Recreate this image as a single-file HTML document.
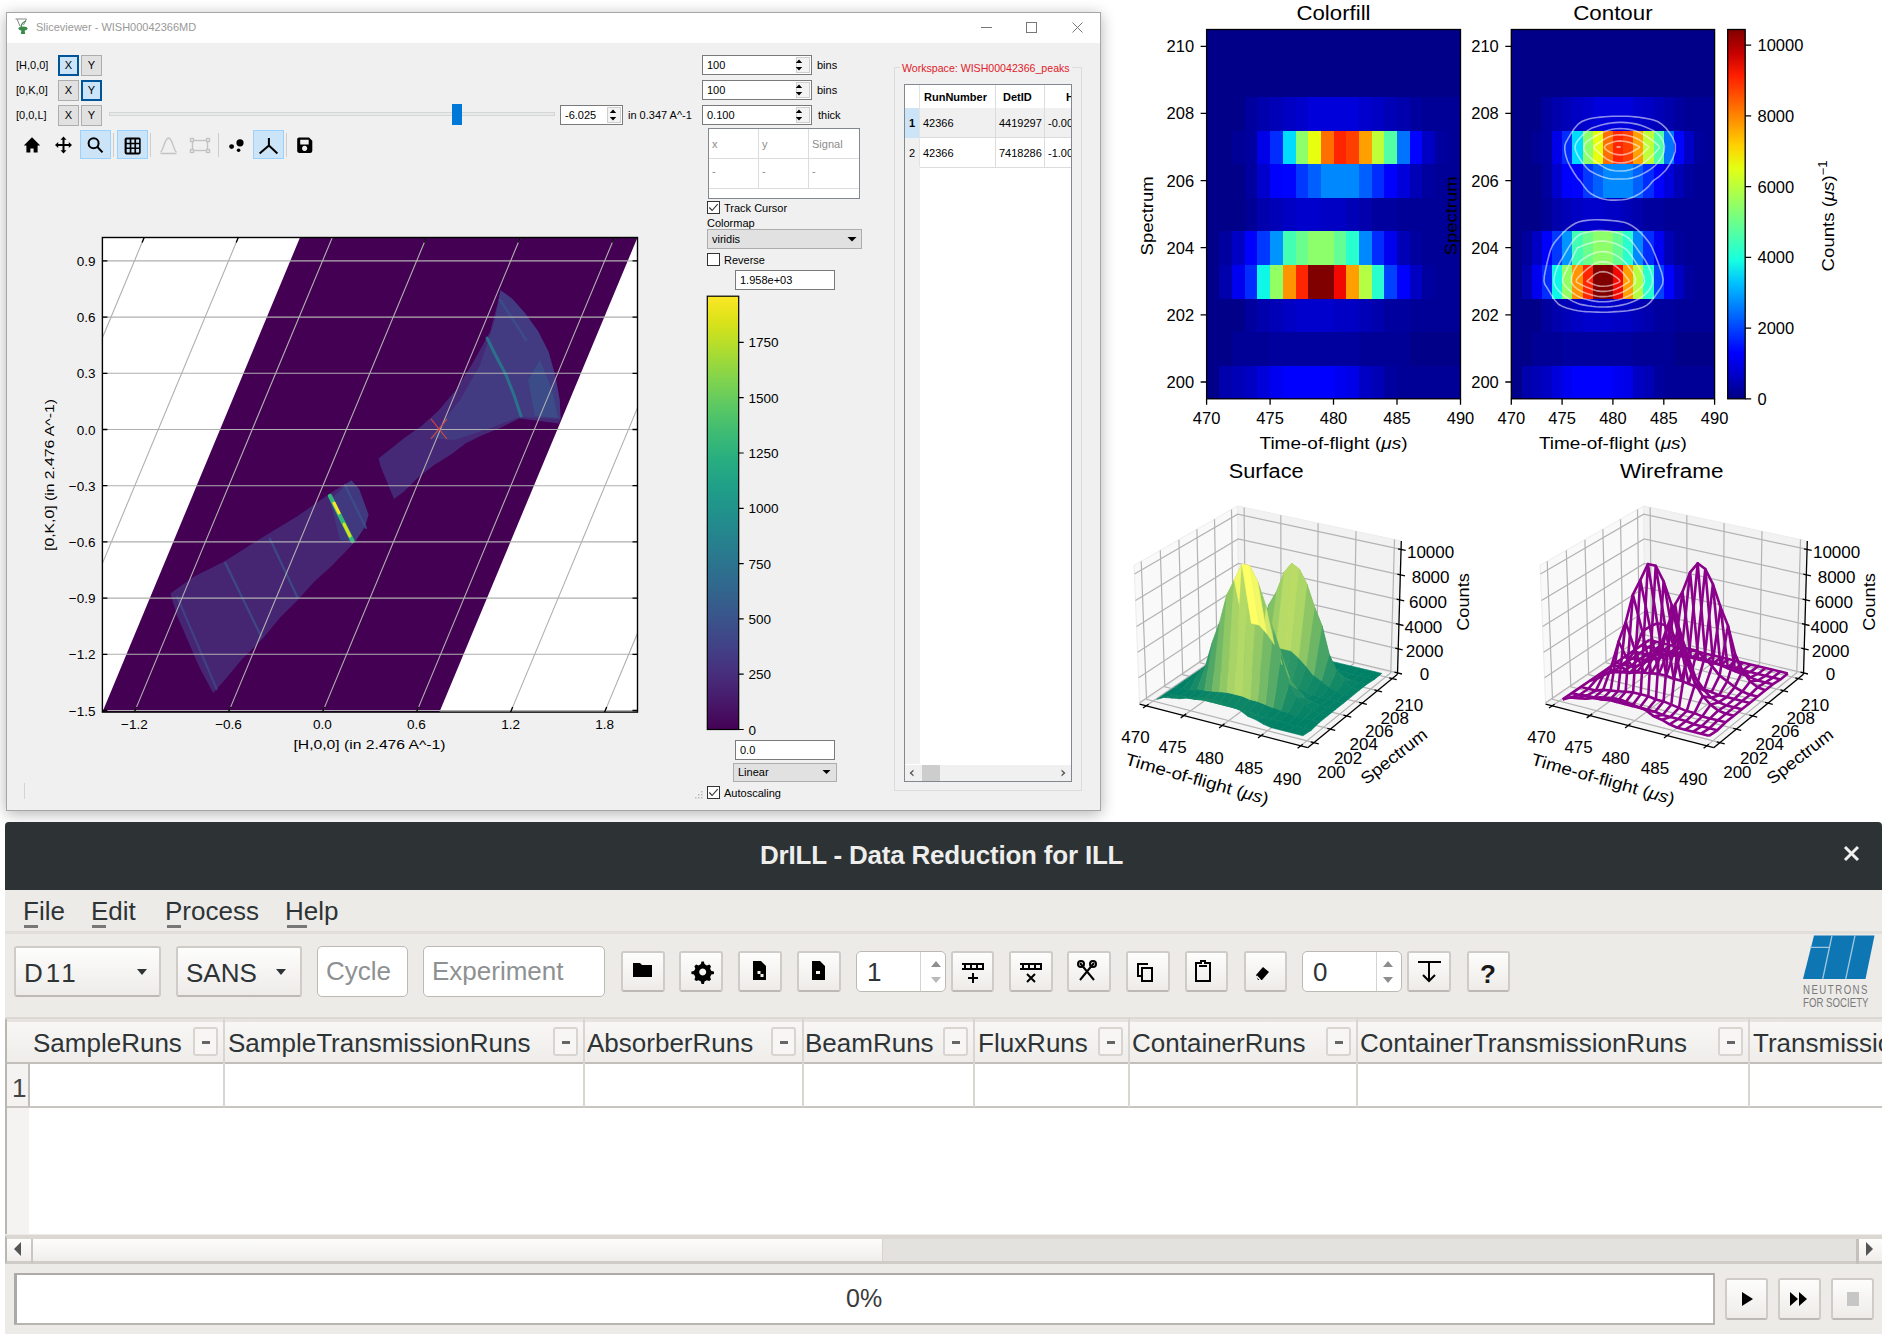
<!DOCTYPE html>
<html><head><meta charset="utf-8">
<style>
*{box-sizing:border-box;margin:0;padding:0}
html,body{width:1885px;height:1340px;overflow:hidden;background:#fff}
body{position:relative;font-family:"Liberation Sans",sans-serif;color:#000}
.a{position:absolute}
.t{position:absolute;white-space:nowrap;line-height:1}
.s11{font-size:11px}
#sv{left:6px;top:12px;width:1095px;height:799px;background:#f0f0f0;border:1px solid #a6a6a6;box-shadow:0 3px 14px rgba(0,0,0,0.30)}
.btn{position:absolute;width:21px;height:21px;background:#e1e1e1;border:1px solid #adadad;font-size:11px;text-align:center;line-height:19px}
.bsel{background:#cce4f7;border:2px solid #005499;line-height:17px}
.spin{position:absolute;height:20px;background:#fff;border:1px solid #7a7a7a;font-size:11px;line-height:18px;padding-left:4px}
.spin i{position:absolute;right:1px;top:1px;width:14px;bottom:1px;border:1px solid #cfcfcf;background:#f3f3f3}
.tb{position:absolute;top:130px;height:29px;width:31px;background:#cce4f7;border:1px solid #99d1ff}
.sep{position:absolute;top:133px;width:1px;height:24px;background:#cdcdcd}
.cb{position:absolute;width:13px;height:13px;background:#fff;border:1px solid #333}
.edit{position:absolute;background:#fff;border:1px solid #7a7a7a;font-size:11px;line-height:18px;padding-left:4px}
.combo{position:absolute;background:#e1e1e1;border:1px solid #adadad;font-size:11px;line-height:18px;padding-left:4px}
#dr{left:5px;top:822px;width:1877px;height:512px;background:#edebe8;border-radius:4px 4px 0 0;overflow:hidden}
.gbtn{position:absolute;border:2px solid #cfcbc7;border-bottom-color:#bdb9b5;border-radius:3px;background:linear-gradient(#fdfdfc,#eeece9)}
.gin{position:absolute;background:#fff;border:1px solid #bdb9b4;border-radius:5px;font-size:26px;line-height:48px;padding-left:8px;color:#2e3436}
.hd{position:absolute;font-size:26px;line-height:1;color:#2e3436;white-space:nowrap}
.mb{position:absolute;top:1027px;width:25px;height:29px;border:2px solid #d8d5d1;border-radius:3px;background:#f7f6f5}
.mb:after{content:"";position:absolute;left:7px;top:12px;width:8px;height:3px;background:#666}
.vd{position:absolute;top:1018px;width:2px;height:89px;background:#d9d5d0}
</style></head><body>
<div id="sv" class="a"><div class="a" style="left:0;top:0;width:1093px;height:30px;background:#fff"></div></div>
<div class="t s11" style="left:36px;top:22px;color:#999">Sliceviewer - WISH00042366MD</div>
<div class="a" style="left:981px;top:27px;width:11px;height:1px;background:#777"></div>
<div class="a" style="left:1026px;top:22px;width:11px;height:11px;border:1px solid #777"></div>
<div class="t s11" style="left:16px;top:60px">[H,0,0]</div>
<div class="t s11" style="left:16px;top:85px">[0,K,0]</div>
<div class="t s11" style="left:16px;top:110px">[0,0,L]</div>
<div class="btn bsel" style="left:58px;top:55px">X</div>
<div class="btn" style="left:81px;top:55px">Y</div>
<div class="btn" style="left:58px;top:80px">X</div>
<div class="btn bsel" style="left:81px;top:80px">Y</div>
<div class="btn" style="left:58px;top:105px">X</div>
<div class="btn" style="left:81px;top:105px">Y</div>
<div class="a" style="left:109px;top:112px;width:446px;height:4px;background:#e7eaea;border:1px solid #d6d6d6"></div>
<div class="a" style="left:452px;top:104px;width:10px;height:21px;background:#0078d7"></div>
<div class="spin" style="left:560px;top:105px;width:63px">-6.025<i></i></div>
<div class="t s11" style="left:628px;top:110px">in 0.347 A^-1</div>
<div class="spin" style="left:702px;top:55px;width:110px">100<i></i></div>
<div class="spin" style="left:702px;top:80px;width:110px">100<i></i></div>
<div class="spin" style="left:702px;top:105px;width:110px">0.100<i></i></div>
<div class="t s11" style="left:817px;top:60px">bins</div>
<div class="t s11" style="left:817px;top:85px">bins</div>
<div class="t s11" style="left:818px;top:110px">thick</div>
<div class="tb" style="left:80px"></div>
<div class="tb" style="left:117px"></div>
<div class="tb" style="left:253px"></div>
<div class="sep" style="left:113px"></div>
<div class="sep" style="left:150px"></div>
<div class="sep" style="left:218px"></div>
<div class="sep" style="left:286px"></div>
<div class="a" style="left:708px;top:128px;width:152px;height:71px;background:#fff;border:1px solid #828790"></div>
<div class="a" style="left:758px;top:129px;width:1px;height:59px;background:#dcdcdc"></div>
<div class="a" style="left:808px;top:129px;width:1px;height:59px;background:#dcdcdc"></div>
<div class="a" style="left:709px;top:158px;width:150px;height:1px;background:#dcdcdc"></div>
<div class="a" style="left:709px;top:188px;width:150px;height:1px;background:#dcdcdc"></div>
<div class="t s11" style="left:712px;top:139px;color:#8c8c8c">x</div>
<div class="t s11" style="left:762px;top:139px;color:#8c8c8c">y</div>
<div class="t s11" style="left:812px;top:139px;color:#8c8c8c">Signal</div>
<div class="t s11" style="left:712px;top:166px;color:#8c8c8c">-</div>
<div class="t s11" style="left:762px;top:166px;color:#8c8c8c">-</div>
<div class="t s11" style="left:812px;top:166px;color:#8c8c8c">-</div>
<div class="cb" style="left:707px;top:201px"></div>
<div class="t s11" style="left:724px;top:203px">Track Cursor</div>
<div class="t s11" style="left:707px;top:218px">Colormap</div>
<div class="combo" style="left:707px;top:229px;width:155px;height:20px">viridis</div>
<div class="cb" style="left:707px;top:253px"></div>
<div class="t s11" style="left:724px;top:255px">Reverse</div>
<div class="edit" style="left:735px;top:270px;width:100px;height:20px">1.958e+03</div>
<div class="edit" style="left:735px;top:740px;width:100px;height:20px">0.0</div>
<div class="combo" style="left:733px;top:763px;width:104px;height:19px;line-height:17px">Linear</div>
<div class="cb" style="left:707px;top:786px"></div>
<div class="t s11" style="left:724px;top:788px">Autoscaling</div>
<div class="a" style="left:24px;top:783px;width:1px;height:16px;background:#d4d4d4"></div>

<div class="a" style="left:894px;top:67px;width:188px;height:724px;border:1px solid #dcdcdc"></div>
<div class="t" style="left:900px;top:63px;color:#e0202a;background:#f0f0f0;padding:0 2px;font-size:10.6px">Workspace: WISH00042366_peaks</div>
<div class="a" style="left:904px;top:84px;width:168px;height:698px;background:#fff;border:1px solid #828790"></div>
<div class="a" style="left:905px;top:85px;width:166px;height:680px;overflow:hidden">
<div class="a" style="left:0;top:23px;width:15px;height:656px;background:#f0f0f0"></div>
<div class="a" style="left:0;top:23px;width:15px;height:30px;background:#cce4f7"></div>
<div class="a" style="left:15px;top:23px;width:151px;height:30px;background:#f0f0f0"></div>
<div class="a" style="left:14px;top:0;width:1px;height:82px;background:#e3e3e3"></div>
<div class="a" style="left:90px;top:0;width:1px;height:82px;background:#dcdcdc"></div>
<div class="a" style="left:139px;top:0;width:1px;height:82px;background:#dcdcdc"></div>
<div class="a" style="left:15px;top:52px;width:151px;height:1px;background:#dcdcdc"></div>
<div class="a" style="left:15px;top:82px;width:151px;height:1px;background:#dcdcdc"></div>
<div class="t s11" style="left:19px;top:7px;font-weight:bold">RunNumber</div>
<div class="t s11" style="left:98px;top:7px;font-weight:bold">DetID</div>
<div class="t s11" style="left:161px;top:7px;font-weight:bold">H</div>
<div class="t s11" style="left:4px;top:33px;font-weight:bold">1</div>
<div class="t s11" style="left:4px;top:63px">2</div>
<div class="t s11" style="left:18px;top:33px">42366</div>
<div class="t s11" style="left:94px;top:33px">4419297</div>
<div class="t s11" style="left:143px;top:33px">-0.00</div>
<div class="t s11" style="left:18px;top:63px">42366</div>
<div class="t s11" style="left:94px;top:63px">7418286</div>
<div class="t s11" style="left:143px;top:63px">-1.00</div>
</div>
<div class="a" style="left:905px;top:765px;width:166px;height:16px;background:#f0f0f0"></div>
<div class="a" style="left:922px;top:765px;width:18px;height:16px;background:#cdcdcd"></div>

<div id="dr" class="a"></div>
<div class="a" style="left:5px;top:822px;width:1877px;height:68px;background:#2d3235;border-radius:4px 4px 0 0"></div>
<div class="t" style="left:760px;top:842px;font-size:26px;font-weight:bold;color:#eeeeec;letter-spacing:-0.2px">DrILL - Data Reduction for ILL</div>
<div class="a" style="left:5px;top:931px;width:1877px;height:3px;background:#e2dfdb"></div>
<div class="t" style="left:23px;top:898px;font-size:26px;color:#2e3436">File</div>
<div class="t" style="left:91px;top:898px;font-size:26px;color:#2e3436">Edit</div>
<div class="t" style="left:165px;top:898px;font-size:26px;color:#2e3436">Process</div>
<div class="t" style="left:285px;top:898px;font-size:26px;color:#2e3436">Help</div>
<div class="a" style="left:24px;top:925px;width:14px;height:3px;background:#777"></div>
<div class="a" style="left:92px;top:925px;width:14px;height:3px;background:#777"></div>
<div class="a" style="left:167px;top:925px;width:14px;height:3px;background:#777"></div>
<div class="a" style="left:287px;top:925px;width:20px;height:3px;background:#777"></div>
<div class="gbtn" style="left:14px;top:946px;width:147px;height:51px"></div>
<div class="gbtn" style="left:176px;top:946px;width:126px;height:51px"></div>
<div class="t" style="left:24px;top:960px;font-size:26px;color:#2e3436;letter-spacing:3px">D11</div>
<div class="t" style="left:186px;top:960px;font-size:26px;color:#2e3436">SANS</div>
<div class="gin" style="left:317px;top:946px;width:91px;height:51px;color:#8e9192">Cycle</div>
<div class="gin" style="left:423px;top:946px;width:182px;height:51px;color:#8e9192">Experiment</div>
<div class="gbtn" style="left:621px;top:951px;width:44px;height:41px"></div>
<div class="gbtn" style="left:679px;top:951px;width:44px;height:41px"></div>
<div class="gbtn" style="left:738px;top:951px;width:44px;height:41px"></div>
<div class="gbtn" style="left:797px;top:951px;width:44px;height:41px"></div>
<div class="gin" style="left:856px;top:951px;width:90px;height:41px;line-height:40px;padding-left:10px">1</div>
<div class="a" style="left:920px;top:952px;width:1px;height:39px;background:#d6d3cf"></div>
<div class="gbtn" style="left:951px;top:951px;width:43px;height:41px"></div>
<div class="gbtn" style="left:1009px;top:951px;width:44px;height:41px"></div>
<div class="gbtn" style="left:1067px;top:951px;width:44px;height:41px"></div>
<div class="gbtn" style="left:1126px;top:951px;width:44px;height:41px"></div>
<div class="gbtn" style="left:1185px;top:951px;width:43px;height:41px"></div>
<div class="gbtn" style="left:1244px;top:951px;width:43px;height:41px"></div>
<div class="gin" style="left:1302px;top:951px;width:100px;height:41px;line-height:40px;padding-left:10px">0</div>
<div class="a" style="left:1376px;top:952px;width:1px;height:39px;background:#d6d3cf"></div>
<div class="gbtn" style="left:1407px;top:951px;width:44px;height:41px"></div>
<div class="gbtn" style="left:1467px;top:951px;width:43px;height:41px"></div>
<div class="t" style="left:1803px;top:984px;font-size:10.5px;color:#7a7a7a;letter-spacing:1.6px;transform:scale(0.92,1.15);transform-origin:0 0">NEUTRONS</div>
<div class="t" style="left:1803px;top:996.5px;font-size:10.5px;color:#7a7a7a;transform:scale(0.92,1.15);transform-origin:0 0">FOR SOCIETY</div>
<div class="a" style="left:5px;top:1017px;width:1877px;height:2px;background:#dcd9d5"></div>
<div class="a" style="left:5px;top:1019px;width:1877px;height:215px;background:#fff;border-left:2px solid #bab6b2"></div>
<div class="a" style="left:7px;top:1019px;width:1875px;height:43px;background:linear-gradient(#e6e3e0 0,#e6e3e0 3px,#f8f7f5 3px,#efedea)"></div>
<div class="a" style="left:7px;top:1062px;width:1875px;height:2px;background:#c2beba"></div>
<div class="a" style="left:7px;top:1064px;width:22px;height:170px;background:#f4f3f1"></div>
<div class="a" style="left:28px;top:1064px;width:2px;height:43px;background:#c2beba"></div>
<div class="a" style="left:7px;top:1106px;width:1875px;height:2px;background:#c8c4c0"></div>
<div class="t" style="left:12px;top:1075px;font-size:26px;color:#444">1</div>
<div class="vd" style="left:223px"></div>
<div class="vd" style="left:583px"></div>
<div class="vd" style="left:802px"></div>
<div class="vd" style="left:973px"></div>
<div class="vd" style="left:1128px"></div>
<div class="vd" style="left:1356px"></div>
<div class="vd" style="left:1748px"></div>
<div class="hd" style="left:33px;top:1030px">SampleRuns</div>
<div class="hd" style="left:228px;top:1030px">SampleTransmissionRuns</div>
<div class="hd" style="left:587px;top:1030px">AbsorberRuns</div>
<div class="hd" style="left:805px;top:1030px">BeamRuns</div>
<div class="hd" style="left:978px;top:1030px">FluxRuns</div>
<div class="hd" style="left:1132px;top:1030px">ContainerRuns</div>
<div class="hd" style="left:1360px;top:1030px">ContainerTransmissionRuns</div>
<div class="hd" style="left:1753px;top:1030px">TransmissionRuns</div>
<div class="a" style="left:1882px;top:1018px;width:3px;height:322px;background:#fff"></div>
<div class="mb" style="left:193px"></div>
<div class="mb" style="left:553px"></div>
<div class="mb" style="left:771px"></div>
<div class="mb" style="left:943px"></div>
<div class="mb" style="left:1098px"></div>
<div class="mb" style="left:1326px"></div>
<div class="mb" style="left:1718px"></div>
<div class="a" style="left:5px;top:1235px;width:1877px;height:29px;background:#e4e2df;border-top:4px solid #dbd8d4;border-bottom:3px solid #cfcbc7;border-left:2px solid #bab6b2"></div>
<div class="a" style="left:7px;top:1239px;width:24px;height:22px;background:linear-gradient(#fdfdfc,#f0eeeb)"></div>
<div class="a" style="left:31px;top:1239px;width:2px;height:25px;background:#cac6c2"></div>
<div class="a" style="left:33px;top:1239px;width:849px;height:22px;background:linear-gradient(#fdfdfc,#f0eeeb)"></div>
<div class="a" style="left:882px;top:1239px;width:1px;height:22px;background:#d6d3cf"></div>
<div class="a" style="left:1856px;top:1239px;width:3px;height:25px;background:#c4c0bc"></div>
<div class="a" style="left:1859px;top:1239px;width:23px;height:22px;background:linear-gradient(#fdfdfc,#f0eeeb)"></div>
<div class="a" style="left:14px;top:1273px;width:1701px;height:52px;background:#fff;border:2px solid #b8b5b1;border-left:3px solid #a9a9a9;border-top-color:#aeaba7;border-radius:1px"></div>
<div class="t" style="left:846px;top:1286px;font-size:25px;color:#3a3a3a">0%</div>
<div class="gbtn" style="left:1725px;top:1278px;width:43px;height:42px"></div>
<div class="gbtn" style="left:1778px;top:1278px;width:43px;height:42px"></div>
<div class="gbtn" style="left:1831px;top:1278px;width:43px;height:42px"></div>
<div class="a" style="left:0;top:1334px;width:1885px;height:6px;background:#fff"></div>

<svg class="a" style="left:0;top:0" width="1885" height="1340">
<g fill="none" stroke="#777" stroke-width="1"><path d="M1072.5 22.5L1082.5 32.5M1082.5 22.5L1072.5 32.5"/></g>
<g transform="translate(15,18)"><path d="M0.5 1h11l-3 6M2 1l3 7" stroke="#888" stroke-width="1" fill="none"/><path d="M6 10c0-3 2-6 5-7" stroke="#3a8a4a" stroke-width="1.3" fill="none"/><ellipse cx="8" cy="10.5" rx="4.5" ry="2" fill="#3a8a4a"/><path d="M6.5 11h3l0.6 5h-4.2z" fill="#3a8a4a"/></g>

<g fill="#000">
<path d="M32 137.2L23.8 145.6h2.6v6.8h4v-4h3.2v4h4v-6.8h2.6z"/>
<path d="M63.5 136.5l-3 3.2h2v4.3h-4.3v-2l-3.2 3 3.2 3v-2h4.3v4.3h-2l3 3.2 3-3.2h-2v-4.3h4.3v2l3.2-3-3.2-3v2h-4.3v-4.3h2z"/>
<path d="M124.6 139.2a1.8 1.8 0 0 1 1.8-1.8h12.5a1.8 1.8 0 0 1 1.8 1.8v13.4a1.8 1.8 0 0 1-1.8 1.8h-12.5a1.8 1.8 0 0 1-1.8-1.8z M126.7 139.5v3.3h3v-3.3z M131.4 139.5v3.3h3v-3.3z M136.1 139.5v3.3h3v-3.3z M126.7 144.3v3.3h3v-3.3z M131.4 144.3v3.3h3v-3.3z M136.1 144.3v3.3h3v-3.3z M126.7 149.1v3.3h3v-3.3z M131.4 149.1v3.3h3v-3.3z M136.1 149.1v3.3h3v-3.3z" fill-rule="evenodd"/>
<circle cx="240" cy="142.8" r="3.6"/><circle cx="231.6" cy="146.6" r="2.4"/><circle cx="238.6" cy="150.2" r="1.8"/>
<path d="M297.2 139.2a1.8 1.8 0 0 1 1.8-1.8h10l3.3 3.3v10.4a1.8 1.8 0 0 1-1.8 1.8h-11.5a1.8 1.8 0 0 1-1.8-1.8z M300.2 139.8v4.6h8.5v-4.6z M304.6 145.8a2.6 2.6 0 1 0 0.01 0z" fill-rule="evenodd"/>
</g>
<g fill="none" stroke="#000" stroke-width="2"><circle cx="93.6" cy="143.2" r="5"/><path d="M97.2 146.8l5.3 5.6"/><path d="M268.9 138v7.6l-9.3 8M268.9 145.6l8.5 8"/></g>
<g fill="none" stroke="#c3c3c3" stroke-width="1.4"><path d="M160.5 153.5h16M160.5 152c3-1 4-14 8-14s5 13 8 14"/><rect x="192.5" y="140.5" width="15" height="10"/><rect x="190.5" y="138.5" width="3" height="3" fill="#f0f0f0"/><rect x="206.5" y="138.5" width="3" height="3" fill="#f0f0f0"/><rect x="190.5" y="149.5" width="3" height="3" fill="#f0f0f0"/><rect x="206.5" y="149.5" width="3" height="3" fill="#f0f0f0"/></g>
<g fill="#000"><path d="M799 59.5l3.2 3.5h-6.4zM799 70.5l3.2-3.5h-6.4z"/><path d="M799 84.5l3.2 3.5h-6.4zM799 95.5l3.2-3.5h-6.4z"/><path d="M799 109.5l3.2 3.5h-6.4zM799 120.5l3.2-3.5h-6.4z"/><path d="M613 109.5l3.2 3.5h-6.4zM613 120.5l3.2-3.5h-6.4z"/>
<path d="M847.5 237h9l-4.5 4.5z"/><path d="M822.5 770h8l-4 4z"/></g>
<g fill="none" stroke="#333" stroke-width="1.1"><path d="M709.3 207.5l2.8 3 5.6-6.3"/><path d="M709.3 792.5l2.8 3 5.6-6.3"/></g>
<g fill="#555"><path d="M913.5 769.5l-4 3.5 4 3.5v-1.8l-2-1.7 2-1.7z"/><path d="M1061.5 769.5l4 3.5-4 3.5v-1.8l2-1.7-2-1.7z"/></g>
<g fill="#bbb"><rect x="701" y="791" width="1.5" height="1.5"/><rect x="698" y="794" width="1.5" height="1.5"/><rect x="701" y="794" width="1.5" height="1.5"/><rect x="695" y="797" width="1.5" height="1.5"/><rect x="698" y="797" width="1.5" height="1.5"/><rect x="701" y="797" width="1.5" height="1.5"/></g>

<defs><clipPath id="svclip"><rect x="102.4" y="237.5" width="535.1" height="474.6"/></clipPath></defs>
<rect x="102.4" y="237.5" width="535.1" height="474.6" fill="#fff"/>
<g clip-path="url(#svclip)">
<polygon points="300,237.5 637.5,237.5 439.4,712.1 102.4,712.1" fill="#440154"/>
<polygon points="500.5,290.3 512.5,298.9 524.5,312.6 538.3,331.5 548.6,352.1 555.4,376.2 559.7,400.2 560.6,419.1 558.9,423.4 519.4,418.5 500.5,427.7 481.6,435.4 466.2,443.1 452.4,453.4 433.5,465.4 418.1,477.5 404.3,491.2 394,499 380.3,465.4 378.6,458.6 404.3,438 421.5,426 438.7,410.5 455.9,389.9 473,362.4 490.2,331.5 497,305.8" fill="#46307d" fill-opacity="0.85"/>
<polygon points="500.5,290.3 512.5,298.9 524.5,312.6 538.3,331.5 548.6,352.1 555.4,376.2 559.7,400.2 560.6,419.1 519.4,417 490,428 455,440 430,438 460,400 480,365 495,320" fill="#3f4788" fill-opacity="0.6"/>
<polygon points="540,360 552,390 558,418 535,416 528,380" fill="#3a548c" fill-opacity="0.7"/>
<polyline points="487,338 496,356 506,375 514,395 521,416" fill="none" stroke="#277f8e" stroke-width="3" stroke-opacity="0.8" stroke-linecap="round"/>
<polyline points="500,300 512,318 526,340" fill="none" stroke="#38598c" stroke-width="2.5" stroke-opacity="0.6" stroke-linecap="round"/>
<polygon points="351.3,480.3 359.1,488.9 368.5,514.6 365.1,526.6 354.8,542.1 331.6,566.1 314.5,581.5 297.3,600.4 280.1,617.6 263,638.2 242.4,658.8 225.2,679.4 213.2,693.1 199.5,667.4 177.2,615.9 170.3,593.6 194.3,576.4 225.2,561 263,536.9 297.3,516.3 331.6,492.3" fill="#462b79" fill-opacity="0.85"/>
<polygon points="351.3,480.3 359.1,488.9 368.5,514.6 365.1,526.6 354.8,542.1 340,540 330,500" fill="#3e4a89" fill-opacity="0.55"/>
<polyline points="269.8,538.6 297.3,597" fill="none" stroke="#3b528b" stroke-width="2.2" stroke-opacity="0.8" stroke-linecap="round"/>
<polyline points="225.2,562.7 261.2,636.5" fill="none" stroke="#3b528b" stroke-width="2.2" stroke-opacity="0.8" stroke-linecap="round"/>
<polyline points="177.2,597 216.6,689" fill="none" stroke="#3f4788" stroke-width="2.2" stroke-opacity="0.8" stroke-linecap="round"/>
<polyline points="345,485 366,528" fill="none" stroke="#3b528b" stroke-width="2" stroke-opacity="0.8" stroke-linecap="round"/>
<polyline points="330,496 341,518 352.5,541" fill="none" stroke="#35b779" stroke-width="4.2" stroke-linecap="round"/>
<polyline points="334,503 339,513" fill="none" stroke="#fde725" stroke-width="3" stroke-linecap="round"/>
<polyline points="344,524 350,536" fill="none" stroke="#d8e219" stroke-width="3" stroke-linecap="round"/>
</g>
<g clip-path="url(#svclip)"><path d="M102.4 260.9H637.5M102.4 317.1H637.5M102.4 373.3H637.5M102.4 429.5H637.5M102.4 485.7H637.5M102.4 541.9H637.5M102.4 598.1H637.5M102.4 654.3H637.5M102.4 710.5H637.5M-53.7 712.1L144.2 237.5M40.4 712.1L238.3 237.5M134.4 712.1L332.3 237.5M228.5 712.1L426.4 237.5M322.5 712.1L520.4 237.5M416.5 712.1L614.4 237.5M510.6 712.1L708.5 237.5M604.6 712.1L802.5 237.5M698.7 712.1L896.6 237.5M792.7 712.1L990.6 237.5" stroke="#b0b0b0" stroke-width="1.1" fill="none"/></g>
<path d="M431 419L447 439M447 419L431 439" stroke="#d9463f" stroke-width="1.2"/>
<path d="M102.4 260.9h5M637.5 260.9h-5M102.4 317.1h5M637.5 317.1h-5M102.4 373.3h5M637.5 373.3h-5M102.4 429.5h5M637.5 429.5h-5M102.4 485.7h5M637.5 485.7h-5M102.4 541.9h5M637.5 541.9h-5M102.4 598.1h5M637.5 598.1h-5M102.4 654.3h5M637.5 654.3h-5M102.4 710.5h5M637.5 710.5h-5M134.4 712.1l2.1 -5M228.5 712.1l2.1 -5M322.5 712.1l2.1 -5M416.5 712.1l2.1 -5M510.6 712.1l2.1 -5M604.6 712.1l2.1 -5M144.2 237.5l-2.1 5M238.3 237.5l-2.1 5M426.4 237.5l-2.1 5M520.4 237.5l-2.1 5M614.4 237.5l-2.1 5" stroke="#000" stroke-width="1.3" fill="none"/>
<rect x="102.4" y="237.5" width="535.1" height="474.6" fill="none" stroke="#000" stroke-width="1.4"/>
<g style="font-family:'Liberation Sans',sans-serif;font-size:13.5px"><text x="95.5" y="265.9" text-anchor="end">0.9</text><text x="95.5" y="322.1" text-anchor="end">0.6</text><text x="95.5" y="378.3" text-anchor="end">0.3</text><text x="95.5" y="434.5" text-anchor="end">0.0</text><text x="95.5" y="490.7" text-anchor="end">−0.3</text><text x="95.5" y="546.9" text-anchor="end">−0.6</text><text x="95.5" y="603.1" text-anchor="end">−0.9</text><text x="95.5" y="659.3" text-anchor="end">−1.2</text><text x="95.5" y="715.5" text-anchor="end">−1.5</text><text x="134.4" y="729" text-anchor="middle">−1.2</text><text x="228.5" y="729" text-anchor="middle">−0.6</text><text x="322.5" y="729" text-anchor="middle">0.0</text><text x="416.5" y="729" text-anchor="middle">0.6</text><text x="510.6" y="729" text-anchor="middle">1.2</text><text x="604.6" y="729" text-anchor="middle">1.8</text></g>
<text style="font-family:'Liberation Sans',sans-serif;font-size:13.5px" x="369.5" y="749" text-anchor="middle" textLength="152" lengthAdjust="spacingAndGlyphs">[H,0,0] (in 2.476 A^-1)</text>
<text style="font-family:'Liberation Sans',sans-serif;font-size:13.5px" transform="translate(49.3,475) rotate(-90)" y="5" text-anchor="middle" textLength="152" lengthAdjust="spacingAndGlyphs">[0,K,0] (in 2.476 A^-1)</text>
<defs><linearGradient id="virg" x1="0" y1="1" x2="0" y2="0"><stop offset="0.0000" stop-color="#440154"/><stop offset="0.0625" stop-color="#48186a"/><stop offset="0.1250" stop-color="#472d7b"/><stop offset="0.1875" stop-color="#424086"/><stop offset="0.2500" stop-color="#3b528b"/><stop offset="0.3125" stop-color="#33638d"/><stop offset="0.3750" stop-color="#2c728e"/><stop offset="0.4375" stop-color="#26828e"/><stop offset="0.5000" stop-color="#21918c"/><stop offset="0.5625" stop-color="#1fa088"/><stop offset="0.6250" stop-color="#28ae80"/><stop offset="0.6875" stop-color="#3fbc73"/><stop offset="0.7500" stop-color="#5ec962"/><stop offset="0.8125" stop-color="#84d44b"/><stop offset="0.8750" stop-color="#addc30"/><stop offset="0.9375" stop-color="#d8e219"/><stop offset="1.0000" stop-color="#fde725"/></linearGradient></defs>
<rect x="707.3" y="296.2" width="31.4" height="433.3" fill="url(#virg)" stroke="#000" stroke-width="1.2"/>
<path d="M738.7 729.5h5M738.7 674.2h5M738.7 618.9h5M738.7 563.6h5M738.7 508.3h5M738.7 453h5M738.7 397.7h5M738.7 342.4h5" stroke="#000" stroke-width="1.2"/>
<g style="font-family:'Liberation Sans',sans-serif;font-size:13.5px"><text x="748.5" y="734.5">0</text><text x="748.5" y="679.2">250</text><text x="748.5" y="623.9">500</text><text x="748.5" y="568.6">750</text><text x="748.5" y="513.3">1000</text><text x="748.5" y="458">1250</text><text x="748.5" y="402.7">1500</text><text x="748.5" y="347.4">1750</text></g>
<g shape-rendering="crispEdges"><rect x="1206.6" y="365.2" width="13.1" height="34" fill="#000089"/><rect x="1219.3" y="365.2" width="13.1" height="34" fill="#0000ad"/><rect x="1232" y="365.2" width="13.1" height="34" fill="#0000b6"/><rect x="1244.7" y="365.2" width="13.1" height="34" fill="#0000c4"/><rect x="1257.4" y="365.2" width="13.1" height="34" fill="#0000da"/><rect x="1270.1" y="365.2" width="13.1" height="34" fill="#0000f1"/><rect x="1282.8" y="365.2" width="13.1" height="34" fill="#0000ff"/><rect x="1295.5" y="365.2" width="13.1" height="34" fill="#0000ff"/><rect x="1308.2" y="365.2" width="13.1" height="34" fill="#0000ff"/><rect x="1320.9" y="365.2" width="13.1" height="34" fill="#0000ff"/><rect x="1333.5" y="365.2" width="13.1" height="34" fill="#0000f1"/><rect x="1346.2" y="365.2" width="13.1" height="34" fill="#0000e8"/><rect x="1358.9" y="365.2" width="13.1" height="34" fill="#0000c4"/><rect x="1371.6" y="365.2" width="13.1" height="34" fill="#0000b6"/><rect x="1384.3" y="365.2" width="13.1" height="34" fill="#00009f"/><rect x="1397" y="365.2" width="13.1" height="34" fill="#000096"/><rect x="1409.7" y="365.2" width="13.1" height="34" fill="#000096"/><rect x="1422.4" y="365.2" width="13.1" height="34" fill="#000096"/><rect x="1435.1" y="365.2" width="13.1" height="34" fill="#000096"/><rect x="1447.8" y="365.2" width="13.1" height="34" fill="#000096"/><rect x="1206.6" y="331.7" width="13.1" height="34" fill="#000089"/><rect x="1219.3" y="331.7" width="13.1" height="34" fill="#000089"/><rect x="1232" y="331.7" width="13.1" height="34" fill="#000096"/><rect x="1244.7" y="331.7" width="13.1" height="34" fill="#000096"/><rect x="1257.4" y="331.7" width="13.1" height="34" fill="#000096"/><rect x="1270.1" y="331.7" width="13.1" height="34" fill="#00009f"/><rect x="1282.8" y="331.7" width="13.1" height="34" fill="#00009f"/><rect x="1295.5" y="331.7" width="13.1" height="34" fill="#00009f"/><rect x="1308.2" y="331.7" width="13.1" height="34" fill="#00009f"/><rect x="1320.9" y="331.7" width="13.1" height="34" fill="#00009f"/><rect x="1333.5" y="331.7" width="13.1" height="34" fill="#00009f"/><rect x="1346.2" y="331.7" width="13.1" height="34" fill="#00009f"/><rect x="1358.9" y="331.7" width="13.1" height="34" fill="#000096"/><rect x="1371.6" y="331.7" width="13.1" height="34" fill="#000096"/><rect x="1384.3" y="331.7" width="13.1" height="34" fill="#000096"/><rect x="1397" y="331.7" width="13.1" height="34" fill="#000096"/><rect x="1409.7" y="331.7" width="13.1" height="34" fill="#000089"/><rect x="1422.4" y="331.7" width="13.1" height="34" fill="#000089"/><rect x="1435.1" y="331.7" width="13.1" height="34" fill="#000089"/><rect x="1447.8" y="331.7" width="13.1" height="34" fill="#000089"/><rect x="1206.6" y="298.1" width="13.1" height="34" fill="#000089"/><rect x="1219.3" y="298.1" width="13.1" height="34" fill="#000089"/><rect x="1232" y="298.1" width="13.1" height="34" fill="#000089"/><rect x="1244.7" y="298.1" width="13.1" height="34" fill="#00009f"/><rect x="1257.4" y="298.1" width="13.1" height="34" fill="#0000ad"/><rect x="1270.1" y="298.1" width="13.1" height="34" fill="#0000b6"/><rect x="1282.8" y="298.1" width="13.1" height="34" fill="#0000c4"/><rect x="1295.5" y="298.1" width="13.1" height="34" fill="#0000cd"/><rect x="1308.2" y="298.1" width="13.1" height="34" fill="#0000cd"/><rect x="1320.9" y="298.1" width="13.1" height="34" fill="#0000cd"/><rect x="1333.5" y="298.1" width="13.1" height="34" fill="#0000c4"/><rect x="1346.2" y="298.1" width="13.1" height="34" fill="#0000c4"/><rect x="1358.9" y="298.1" width="13.1" height="34" fill="#0000b6"/><rect x="1371.6" y="298.1" width="13.1" height="34" fill="#0000ad"/><rect x="1384.3" y="298.1" width="13.1" height="34" fill="#00009f"/><rect x="1397" y="298.1" width="13.1" height="34" fill="#00009f"/><rect x="1409.7" y="298.1" width="13.1" height="34" fill="#000096"/><rect x="1422.4" y="298.1" width="13.1" height="34" fill="#000096"/><rect x="1435.1" y="298.1" width="13.1" height="34" fill="#000096"/><rect x="1447.8" y="298.1" width="13.1" height="34" fill="#000096"/><rect x="1206.6" y="264.5" width="13.1" height="34" fill="#000089"/><rect x="1219.3" y="264.5" width="13.1" height="34" fill="#0000ad"/><rect x="1232" y="264.5" width="13.1" height="34" fill="#0000f1"/><rect x="1244.7" y="264.5" width="13.1" height="34" fill="#002cff"/><rect x="1257.4" y="264.5" width="13.1" height="34" fill="#0ff8e7"/><rect x="1270.1" y="264.5" width="13.1" height="34" fill="#94ff63"/><rect x="1282.8" y="264.5" width="13.1" height="34" fill="#ff9400"/><rect x="1295.5" y="264.5" width="13.1" height="34" fill="#ff2500"/><rect x="1308.2" y="264.5" width="13.1" height="34" fill="#800000"/><rect x="1320.9" y="264.5" width="13.1" height="34" fill="#800000"/><rect x="1333.5" y="264.5" width="13.1" height="34" fill="#f10800"/><rect x="1346.2" y="264.5" width="13.1" height="34" fill="#ff9f00"/><rect x="1358.9" y="264.5" width="13.1" height="34" fill="#b4ff43"/><rect x="1371.6" y="264.5" width="13.1" height="34" fill="#29ffce"/><rect x="1384.3" y="264.5" width="13.1" height="34" fill="#0040ff"/><rect x="1397" y="264.5" width="13.1" height="34" fill="#0000ff"/><rect x="1409.7" y="264.5" width="13.1" height="34" fill="#0000c4"/><rect x="1422.4" y="264.5" width="13.1" height="34" fill="#00009f"/><rect x="1435.1" y="264.5" width="13.1" height="34" fill="#000096"/><rect x="1447.8" y="264.5" width="13.1" height="34" fill="#000096"/><rect x="1206.6" y="230.9" width="13.1" height="34" fill="#000089"/><rect x="1219.3" y="230.9" width="13.1" height="34" fill="#00009f"/><rect x="1232" y="230.9" width="13.1" height="34" fill="#0000c4"/><rect x="1244.7" y="230.9" width="13.1" height="34" fill="#0000ff"/><rect x="1257.4" y="230.9" width="13.1" height="34" fill="#0038ff"/><rect x="1270.1" y="230.9" width="13.1" height="34" fill="#0094ff"/><rect x="1282.8" y="230.9" width="13.1" height="34" fill="#43ffb4"/><rect x="1295.5" y="230.9" width="13.1" height="34" fill="#6aff8d"/><rect x="1308.2" y="230.9" width="13.1" height="34" fill="#8dff6a"/><rect x="1320.9" y="230.9" width="13.1" height="34" fill="#8dff6a"/><rect x="1333.5" y="230.9" width="13.1" height="34" fill="#63ff94"/><rect x="1346.2" y="230.9" width="13.1" height="34" fill="#29ffce"/><rect x="1358.9" y="230.9" width="13.1" height="34" fill="#0088ff"/><rect x="1371.6" y="230.9" width="13.1" height="34" fill="#002cff"/><rect x="1384.3" y="230.9" width="13.1" height="34" fill="#0000f1"/><rect x="1397" y="230.9" width="13.1" height="34" fill="#0000b6"/><rect x="1409.7" y="230.9" width="13.1" height="34" fill="#00009f"/><rect x="1422.4" y="230.9" width="13.1" height="34" fill="#000096"/><rect x="1435.1" y="230.9" width="13.1" height="34" fill="#000096"/><rect x="1447.8" y="230.9" width="13.1" height="34" fill="#000096"/><rect x="1206.6" y="197.4" width="13.1" height="34" fill="#000089"/><rect x="1219.3" y="197.4" width="13.1" height="34" fill="#000089"/><rect x="1232" y="197.4" width="13.1" height="34" fill="#000089"/><rect x="1244.7" y="197.4" width="13.1" height="34" fill="#000096"/><rect x="1257.4" y="197.4" width="13.1" height="34" fill="#0000ad"/><rect x="1270.1" y="197.4" width="13.1" height="34" fill="#0000b6"/><rect x="1282.8" y="197.4" width="13.1" height="34" fill="#0000c4"/><rect x="1295.5" y="197.4" width="13.1" height="34" fill="#0000cd"/><rect x="1308.2" y="197.4" width="13.1" height="34" fill="#0000cd"/><rect x="1320.9" y="197.4" width="13.1" height="34" fill="#0000c4"/><rect x="1333.5" y="197.4" width="13.1" height="34" fill="#0000c4"/><rect x="1346.2" y="197.4" width="13.1" height="34" fill="#0000b6"/><rect x="1358.9" y="197.4" width="13.1" height="34" fill="#0000ad"/><rect x="1371.6" y="197.4" width="13.1" height="34" fill="#00009f"/><rect x="1384.3" y="197.4" width="13.1" height="34" fill="#00009f"/><rect x="1397" y="197.4" width="13.1" height="34" fill="#000096"/><rect x="1409.7" y="197.4" width="13.1" height="34" fill="#000096"/><rect x="1422.4" y="197.4" width="13.1" height="34" fill="#000096"/><rect x="1435.1" y="197.4" width="13.1" height="34" fill="#000096"/><rect x="1447.8" y="197.4" width="13.1" height="34" fill="#000096"/><rect x="1206.6" y="163.8" width="13.1" height="34" fill="#000089"/><rect x="1219.3" y="163.8" width="13.1" height="34" fill="#000089"/><rect x="1232" y="163.8" width="13.1" height="34" fill="#000089"/><rect x="1244.7" y="163.8" width="13.1" height="34" fill="#00009f"/><rect x="1257.4" y="163.8" width="13.1" height="34" fill="#0000cd"/><rect x="1270.1" y="163.8" width="13.1" height="34" fill="#0000ff"/><rect x="1282.8" y="163.8" width="13.1" height="34" fill="#0004ff"/><rect x="1295.5" y="163.8" width="13.1" height="34" fill="#0038ff"/><rect x="1308.2" y="163.8" width="13.1" height="34" fill="#0060ff"/><rect x="1320.9" y="163.8" width="13.1" height="34" fill="#0088ff"/><rect x="1333.5" y="163.8" width="13.1" height="34" fill="#0088ff"/><rect x="1346.2" y="163.8" width="13.1" height="34" fill="#0088ff"/><rect x="1358.9" y="163.8" width="13.1" height="34" fill="#0060ff"/><rect x="1371.6" y="163.8" width="13.1" height="34" fill="#002cff"/><rect x="1384.3" y="163.8" width="13.1" height="34" fill="#0000ff"/><rect x="1397" y="163.8" width="13.1" height="34" fill="#0000da"/><rect x="1409.7" y="163.8" width="13.1" height="34" fill="#0000b6"/><rect x="1422.4" y="163.8" width="13.1" height="34" fill="#00009f"/><rect x="1435.1" y="163.8" width="13.1" height="34" fill="#000096"/><rect x="1447.8" y="163.8" width="13.1" height="34" fill="#000096"/><rect x="1206.6" y="130.2" width="13.1" height="34" fill="#000089"/><rect x="1219.3" y="130.2" width="13.1" height="34" fill="#000089"/><rect x="1232" y="130.2" width="13.1" height="34" fill="#000096"/><rect x="1244.7" y="130.2" width="13.1" height="34" fill="#00009f"/><rect x="1257.4" y="130.2" width="13.1" height="34" fill="#0000e8"/><rect x="1270.1" y="130.2" width="13.1" height="34" fill="#002cff"/><rect x="1282.8" y="130.2" width="13.1" height="34" fill="#00dcfe"/><rect x="1295.5" y="130.2" width="13.1" height="34" fill="#8dff6a"/><rect x="1308.2" y="130.2" width="13.1" height="34" fill="#e7ff0f"/><rect x="1320.9" y="130.2" width="13.1" height="34" fill="#ff6f00"/><rect x="1333.5" y="130.2" width="13.1" height="34" fill="#ff2500"/><rect x="1346.2" y="130.2" width="13.1" height="34" fill="#ff3f00"/><rect x="1358.9" y="130.2" width="13.1" height="34" fill="#ff9f00"/><rect x="1371.6" y="130.2" width="13.1" height="34" fill="#beff39"/><rect x="1384.3" y="130.2" width="13.1" height="34" fill="#53ffa4"/><rect x="1397" y="130.2" width="13.1" height="34" fill="#0074ff"/><rect x="1409.7" y="130.2" width="13.1" height="34" fill="#0004ff"/><rect x="1422.4" y="130.2" width="13.1" height="34" fill="#0000c4"/><rect x="1435.1" y="130.2" width="13.1" height="34" fill="#00009f"/><rect x="1447.8" y="130.2" width="13.1" height="34" fill="#000096"/><rect x="1206.6" y="96.6" width="13.1" height="34" fill="#000089"/><rect x="1219.3" y="96.6" width="13.1" height="34" fill="#000089"/><rect x="1232" y="96.6" width="13.1" height="34" fill="#000089"/><rect x="1244.7" y="96.6" width="13.1" height="34" fill="#00009f"/><rect x="1257.4" y="96.6" width="13.1" height="34" fill="#0000ad"/><rect x="1270.1" y="96.6" width="13.1" height="34" fill="#0000b6"/><rect x="1282.8" y="96.6" width="13.1" height="34" fill="#0000c4"/><rect x="1295.5" y="96.6" width="13.1" height="34" fill="#0000cd"/><rect x="1308.2" y="96.6" width="13.1" height="34" fill="#0000da"/><rect x="1320.9" y="96.6" width="13.1" height="34" fill="#0000da"/><rect x="1333.5" y="96.6" width="13.1" height="34" fill="#0000da"/><rect x="1346.2" y="96.6" width="13.1" height="34" fill="#0000da"/><rect x="1358.9" y="96.6" width="13.1" height="34" fill="#0000cd"/><rect x="1371.6" y="96.6" width="13.1" height="34" fill="#0000c4"/><rect x="1384.3" y="96.6" width="13.1" height="34" fill="#0000b6"/><rect x="1397" y="96.6" width="13.1" height="34" fill="#0000ad"/><rect x="1409.7" y="96.6" width="13.1" height="34" fill="#00009f"/><rect x="1422.4" y="96.6" width="13.1" height="34" fill="#000096"/><rect x="1435.1" y="96.6" width="13.1" height="34" fill="#000096"/><rect x="1447.8" y="96.6" width="13.1" height="34" fill="#000096"/><rect x="1206.6" y="63.1" width="13.1" height="34" fill="#000089"/><rect x="1219.3" y="63.1" width="13.1" height="34" fill="#000089"/><rect x="1232" y="63.1" width="13.1" height="34" fill="#000089"/><rect x="1244.7" y="63.1" width="13.1" height="34" fill="#000089"/><rect x="1257.4" y="63.1" width="13.1" height="34" fill="#000089"/><rect x="1270.1" y="63.1" width="13.1" height="34" fill="#000089"/><rect x="1282.8" y="63.1" width="13.1" height="34" fill="#000089"/><rect x="1295.5" y="63.1" width="13.1" height="34" fill="#000089"/><rect x="1308.2" y="63.1" width="13.1" height="34" fill="#000089"/><rect x="1320.9" y="63.1" width="13.1" height="34" fill="#000089"/><rect x="1333.5" y="63.1" width="13.1" height="34" fill="#000089"/><rect x="1346.2" y="63.1" width="13.1" height="34" fill="#000089"/><rect x="1358.9" y="63.1" width="13.1" height="34" fill="#000089"/><rect x="1371.6" y="63.1" width="13.1" height="34" fill="#000089"/><rect x="1384.3" y="63.1" width="13.1" height="34" fill="#000089"/><rect x="1397" y="63.1" width="13.1" height="34" fill="#000089"/><rect x="1409.7" y="63.1" width="13.1" height="34" fill="#000089"/><rect x="1422.4" y="63.1" width="13.1" height="34" fill="#000089"/><rect x="1435.1" y="63.1" width="13.1" height="34" fill="#000089"/><rect x="1447.8" y="63.1" width="13.1" height="34" fill="#000089"/><rect x="1206.6" y="29.5" width="13.1" height="34" fill="#000089"/><rect x="1219.3" y="29.5" width="13.1" height="34" fill="#000089"/><rect x="1232" y="29.5" width="13.1" height="34" fill="#000089"/><rect x="1244.7" y="29.5" width="13.1" height="34" fill="#000089"/><rect x="1257.4" y="29.5" width="13.1" height="34" fill="#000089"/><rect x="1270.1" y="29.5" width="13.1" height="34" fill="#000089"/><rect x="1282.8" y="29.5" width="13.1" height="34" fill="#000089"/><rect x="1295.5" y="29.5" width="13.1" height="34" fill="#000089"/><rect x="1308.2" y="29.5" width="13.1" height="34" fill="#000089"/><rect x="1320.9" y="29.5" width="13.1" height="34" fill="#000089"/><rect x="1333.5" y="29.5" width="13.1" height="34" fill="#000089"/><rect x="1346.2" y="29.5" width="13.1" height="34" fill="#000089"/><rect x="1358.9" y="29.5" width="13.1" height="34" fill="#000089"/><rect x="1371.6" y="29.5" width="13.1" height="34" fill="#000089"/><rect x="1384.3" y="29.5" width="13.1" height="34" fill="#000089"/><rect x="1397" y="29.5" width="13.1" height="34" fill="#000089"/><rect x="1409.7" y="29.5" width="13.1" height="34" fill="#000089"/><rect x="1422.4" y="29.5" width="13.1" height="34" fill="#000089"/><rect x="1435.1" y="29.5" width="13.1" height="34" fill="#000089"/><rect x="1447.8" y="29.5" width="13.1" height="34" fill="#000089"/></g>
<rect x="1206.6" y="29.5" width="253.9" height="369.3" fill="none" stroke="#000" stroke-width="1.3"/>
<path d="M1206.6 398.8v6M1270.1 398.8v6M1333.5 398.8v6M1397 398.8v6M1460.5 398.8v6M1206.6 382h-6M1206.6 314.9h-6M1206.6 247.7h-6M1206.6 180.6h-6M1206.6 113.4h-6M1206.6 46.3h-6" stroke="#000" stroke-width="1.3"/>
<g style="font-family:'Liberation Sans',sans-serif;font-size:16.5px" text-anchor="middle"><text x="1206.6" y="423.5">470</text><text x="1270.1" y="423.5">475</text><text x="1333.5" y="423.5">480</text><text x="1397" y="423.5">485</text><text x="1460.5" y="423.5">490</text></g>
<g style="font-family:'Liberation Sans',sans-serif;font-size:16.5px" text-anchor="end"><text x="1194.1" y="388">200</text><text x="1194.1" y="320.9">202</text><text x="1194.1" y="253.7">204</text><text x="1194.1" y="186.6">206</text><text x="1194.1" y="119.4">208</text><text x="1194.1" y="52.3">210</text></g>
<text style="font-family:'Liberation Sans',sans-serif;font-size:17px" text-anchor="middle" x="1333.5" y="448.5" textLength="148" lengthAdjust="spacingAndGlyphs">Time-of-flight (<tspan font-style="italic">μs</tspan>)</text>
<text style="font-family:'Liberation Sans',sans-serif;font-size:17px" text-anchor="middle" transform="translate(1147,215.9) rotate(-90)" y="6" textLength="79" lengthAdjust="spacingAndGlyphs">Spectrum</text>
<text style="font-family:'Liberation Sans',sans-serif;font-size:20px" text-anchor="middle" x="1333.5" y="20" textLength="74" lengthAdjust="spacingAndGlyphs">Colorfill</text>
<g shape-rendering="crispEdges"><rect x="1511.3" y="365.2" width="10.6" height="34" fill="#000089"/><rect x="1521.5" y="365.2" width="10.6" height="34" fill="#0000ad"/><rect x="1531.6" y="365.2" width="10.6" height="34" fill="#0000b6"/><rect x="1541.8" y="365.2" width="10.6" height="34" fill="#0000c4"/><rect x="1552" y="365.2" width="10.6" height="34" fill="#0000da"/><rect x="1562.1" y="365.2" width="10.6" height="34" fill="#0000f1"/><rect x="1572.3" y="365.2" width="10.6" height="34" fill="#0000ff"/><rect x="1582.5" y="365.2" width="10.6" height="34" fill="#0000ff"/><rect x="1592.6" y="365.2" width="10.6" height="34" fill="#0000ff"/><rect x="1602.8" y="365.2" width="10.6" height="34" fill="#0000ff"/><rect x="1612.9" y="365.2" width="10.6" height="34" fill="#0000f1"/><rect x="1623.1" y="365.2" width="10.6" height="34" fill="#0000e8"/><rect x="1633.3" y="365.2" width="10.6" height="34" fill="#0000c4"/><rect x="1643.4" y="365.2" width="10.6" height="34" fill="#0000b6"/><rect x="1653.6" y="365.2" width="10.6" height="34" fill="#00009f"/><rect x="1663.8" y="365.2" width="10.6" height="34" fill="#000096"/><rect x="1673.9" y="365.2" width="10.6" height="34" fill="#000096"/><rect x="1684.1" y="365.2" width="10.6" height="34" fill="#000096"/><rect x="1694.3" y="365.2" width="10.6" height="34" fill="#000096"/><rect x="1704.4" y="365.2" width="10.6" height="34" fill="#000096"/><rect x="1511.3" y="331.7" width="10.6" height="34" fill="#000089"/><rect x="1521.5" y="331.7" width="10.6" height="34" fill="#000089"/><rect x="1531.6" y="331.7" width="10.6" height="34" fill="#000096"/><rect x="1541.8" y="331.7" width="10.6" height="34" fill="#000096"/><rect x="1552" y="331.7" width="10.6" height="34" fill="#000096"/><rect x="1562.1" y="331.7" width="10.6" height="34" fill="#00009f"/><rect x="1572.3" y="331.7" width="10.6" height="34" fill="#00009f"/><rect x="1582.5" y="331.7" width="10.6" height="34" fill="#00009f"/><rect x="1592.6" y="331.7" width="10.6" height="34" fill="#00009f"/><rect x="1602.8" y="331.7" width="10.6" height="34" fill="#00009f"/><rect x="1612.9" y="331.7" width="10.6" height="34" fill="#00009f"/><rect x="1623.1" y="331.7" width="10.6" height="34" fill="#00009f"/><rect x="1633.3" y="331.7" width="10.6" height="34" fill="#000096"/><rect x="1643.4" y="331.7" width="10.6" height="34" fill="#000096"/><rect x="1653.6" y="331.7" width="10.6" height="34" fill="#000096"/><rect x="1663.8" y="331.7" width="10.6" height="34" fill="#000096"/><rect x="1673.9" y="331.7" width="10.6" height="34" fill="#000089"/><rect x="1684.1" y="331.7" width="10.6" height="34" fill="#000089"/><rect x="1694.3" y="331.7" width="10.6" height="34" fill="#000089"/><rect x="1704.4" y="331.7" width="10.6" height="34" fill="#000089"/><rect x="1511.3" y="298.1" width="10.6" height="34" fill="#000089"/><rect x="1521.5" y="298.1" width="10.6" height="34" fill="#000089"/><rect x="1531.6" y="298.1" width="10.6" height="34" fill="#000089"/><rect x="1541.8" y="298.1" width="10.6" height="34" fill="#00009f"/><rect x="1552" y="298.1" width="10.6" height="34" fill="#0000ad"/><rect x="1562.1" y="298.1" width="10.6" height="34" fill="#0000b6"/><rect x="1572.3" y="298.1" width="10.6" height="34" fill="#0000c4"/><rect x="1582.5" y="298.1" width="10.6" height="34" fill="#0000cd"/><rect x="1592.6" y="298.1" width="10.6" height="34" fill="#0000cd"/><rect x="1602.8" y="298.1" width="10.6" height="34" fill="#0000cd"/><rect x="1612.9" y="298.1" width="10.6" height="34" fill="#0000c4"/><rect x="1623.1" y="298.1" width="10.6" height="34" fill="#0000c4"/><rect x="1633.3" y="298.1" width="10.6" height="34" fill="#0000b6"/><rect x="1643.4" y="298.1" width="10.6" height="34" fill="#0000ad"/><rect x="1653.6" y="298.1" width="10.6" height="34" fill="#00009f"/><rect x="1663.8" y="298.1" width="10.6" height="34" fill="#00009f"/><rect x="1673.9" y="298.1" width="10.6" height="34" fill="#000096"/><rect x="1684.1" y="298.1" width="10.6" height="34" fill="#000096"/><rect x="1694.3" y="298.1" width="10.6" height="34" fill="#000096"/><rect x="1704.4" y="298.1" width="10.6" height="34" fill="#000096"/><rect x="1511.3" y="264.5" width="10.6" height="34" fill="#000089"/><rect x="1521.5" y="264.5" width="10.6" height="34" fill="#0000ad"/><rect x="1531.6" y="264.5" width="10.6" height="34" fill="#0000f1"/><rect x="1541.8" y="264.5" width="10.6" height="34" fill="#002cff"/><rect x="1552" y="264.5" width="10.6" height="34" fill="#0ff8e7"/><rect x="1562.1" y="264.5" width="10.6" height="34" fill="#94ff63"/><rect x="1572.3" y="264.5" width="10.6" height="34" fill="#ff9400"/><rect x="1582.5" y="264.5" width="10.6" height="34" fill="#ff2500"/><rect x="1592.6" y="264.5" width="10.6" height="34" fill="#800000"/><rect x="1602.8" y="264.5" width="10.6" height="34" fill="#800000"/><rect x="1612.9" y="264.5" width="10.6" height="34" fill="#f10800"/><rect x="1623.1" y="264.5" width="10.6" height="34" fill="#ff9f00"/><rect x="1633.3" y="264.5" width="10.6" height="34" fill="#b4ff43"/><rect x="1643.4" y="264.5" width="10.6" height="34" fill="#29ffce"/><rect x="1653.6" y="264.5" width="10.6" height="34" fill="#0040ff"/><rect x="1663.8" y="264.5" width="10.6" height="34" fill="#0000ff"/><rect x="1673.9" y="264.5" width="10.6" height="34" fill="#0000c4"/><rect x="1684.1" y="264.5" width="10.6" height="34" fill="#00009f"/><rect x="1694.3" y="264.5" width="10.6" height="34" fill="#000096"/><rect x="1704.4" y="264.5" width="10.6" height="34" fill="#000096"/><rect x="1511.3" y="230.9" width="10.6" height="34" fill="#000089"/><rect x="1521.5" y="230.9" width="10.6" height="34" fill="#00009f"/><rect x="1531.6" y="230.9" width="10.6" height="34" fill="#0000c4"/><rect x="1541.8" y="230.9" width="10.6" height="34" fill="#0000ff"/><rect x="1552" y="230.9" width="10.6" height="34" fill="#0038ff"/><rect x="1562.1" y="230.9" width="10.6" height="34" fill="#0094ff"/><rect x="1572.3" y="230.9" width="10.6" height="34" fill="#43ffb4"/><rect x="1582.5" y="230.9" width="10.6" height="34" fill="#6aff8d"/><rect x="1592.6" y="230.9" width="10.6" height="34" fill="#8dff6a"/><rect x="1602.8" y="230.9" width="10.6" height="34" fill="#8dff6a"/><rect x="1612.9" y="230.9" width="10.6" height="34" fill="#63ff94"/><rect x="1623.1" y="230.9" width="10.6" height="34" fill="#29ffce"/><rect x="1633.3" y="230.9" width="10.6" height="34" fill="#0088ff"/><rect x="1643.4" y="230.9" width="10.6" height="34" fill="#002cff"/><rect x="1653.6" y="230.9" width="10.6" height="34" fill="#0000f1"/><rect x="1663.8" y="230.9" width="10.6" height="34" fill="#0000b6"/><rect x="1673.9" y="230.9" width="10.6" height="34" fill="#00009f"/><rect x="1684.1" y="230.9" width="10.6" height="34" fill="#000096"/><rect x="1694.3" y="230.9" width="10.6" height="34" fill="#000096"/><rect x="1704.4" y="230.9" width="10.6" height="34" fill="#000096"/><rect x="1511.3" y="197.4" width="10.6" height="34" fill="#000089"/><rect x="1521.5" y="197.4" width="10.6" height="34" fill="#000089"/><rect x="1531.6" y="197.4" width="10.6" height="34" fill="#000089"/><rect x="1541.8" y="197.4" width="10.6" height="34" fill="#000096"/><rect x="1552" y="197.4" width="10.6" height="34" fill="#0000ad"/><rect x="1562.1" y="197.4" width="10.6" height="34" fill="#0000b6"/><rect x="1572.3" y="197.4" width="10.6" height="34" fill="#0000c4"/><rect x="1582.5" y="197.4" width="10.6" height="34" fill="#0000cd"/><rect x="1592.6" y="197.4" width="10.6" height="34" fill="#0000cd"/><rect x="1602.8" y="197.4" width="10.6" height="34" fill="#0000c4"/><rect x="1612.9" y="197.4" width="10.6" height="34" fill="#0000c4"/><rect x="1623.1" y="197.4" width="10.6" height="34" fill="#0000b6"/><rect x="1633.3" y="197.4" width="10.6" height="34" fill="#0000ad"/><rect x="1643.4" y="197.4" width="10.6" height="34" fill="#00009f"/><rect x="1653.6" y="197.4" width="10.6" height="34" fill="#00009f"/><rect x="1663.8" y="197.4" width="10.6" height="34" fill="#000096"/><rect x="1673.9" y="197.4" width="10.6" height="34" fill="#000096"/><rect x="1684.1" y="197.4" width="10.6" height="34" fill="#000096"/><rect x="1694.3" y="197.4" width="10.6" height="34" fill="#000096"/><rect x="1704.4" y="197.4" width="10.6" height="34" fill="#000096"/><rect x="1511.3" y="163.8" width="10.6" height="34" fill="#000089"/><rect x="1521.5" y="163.8" width="10.6" height="34" fill="#000089"/><rect x="1531.6" y="163.8" width="10.6" height="34" fill="#000089"/><rect x="1541.8" y="163.8" width="10.6" height="34" fill="#00009f"/><rect x="1552" y="163.8" width="10.6" height="34" fill="#0000cd"/><rect x="1562.1" y="163.8" width="10.6" height="34" fill="#0000ff"/><rect x="1572.3" y="163.8" width="10.6" height="34" fill="#0004ff"/><rect x="1582.5" y="163.8" width="10.6" height="34" fill="#0038ff"/><rect x="1592.6" y="163.8" width="10.6" height="34" fill="#0060ff"/><rect x="1602.8" y="163.8" width="10.6" height="34" fill="#0088ff"/><rect x="1612.9" y="163.8" width="10.6" height="34" fill="#0088ff"/><rect x="1623.1" y="163.8" width="10.6" height="34" fill="#0088ff"/><rect x="1633.3" y="163.8" width="10.6" height="34" fill="#0060ff"/><rect x="1643.4" y="163.8" width="10.6" height="34" fill="#002cff"/><rect x="1653.6" y="163.8" width="10.6" height="34" fill="#0000ff"/><rect x="1663.8" y="163.8" width="10.6" height="34" fill="#0000da"/><rect x="1673.9" y="163.8" width="10.6" height="34" fill="#0000b6"/><rect x="1684.1" y="163.8" width="10.6" height="34" fill="#00009f"/><rect x="1694.3" y="163.8" width="10.6" height="34" fill="#000096"/><rect x="1704.4" y="163.8" width="10.6" height="34" fill="#000096"/><rect x="1511.3" y="130.2" width="10.6" height="34" fill="#000089"/><rect x="1521.5" y="130.2" width="10.6" height="34" fill="#000089"/><rect x="1531.6" y="130.2" width="10.6" height="34" fill="#000096"/><rect x="1541.8" y="130.2" width="10.6" height="34" fill="#00009f"/><rect x="1552" y="130.2" width="10.6" height="34" fill="#0000e8"/><rect x="1562.1" y="130.2" width="10.6" height="34" fill="#002cff"/><rect x="1572.3" y="130.2" width="10.6" height="34" fill="#00dcfe"/><rect x="1582.5" y="130.2" width="10.6" height="34" fill="#8dff6a"/><rect x="1592.6" y="130.2" width="10.6" height="34" fill="#e7ff0f"/><rect x="1602.8" y="130.2" width="10.6" height="34" fill="#ff6f00"/><rect x="1612.9" y="130.2" width="10.6" height="34" fill="#ff2500"/><rect x="1623.1" y="130.2" width="10.6" height="34" fill="#ff3f00"/><rect x="1633.3" y="130.2" width="10.6" height="34" fill="#ff9f00"/><rect x="1643.4" y="130.2" width="10.6" height="34" fill="#beff39"/><rect x="1653.6" y="130.2" width="10.6" height="34" fill="#53ffa4"/><rect x="1663.8" y="130.2" width="10.6" height="34" fill="#0074ff"/><rect x="1673.9" y="130.2" width="10.6" height="34" fill="#0004ff"/><rect x="1684.1" y="130.2" width="10.6" height="34" fill="#0000c4"/><rect x="1694.3" y="130.2" width="10.6" height="34" fill="#00009f"/><rect x="1704.4" y="130.2" width="10.6" height="34" fill="#000096"/><rect x="1511.3" y="96.6" width="10.6" height="34" fill="#000089"/><rect x="1521.5" y="96.6" width="10.6" height="34" fill="#000089"/><rect x="1531.6" y="96.6" width="10.6" height="34" fill="#000089"/><rect x="1541.8" y="96.6" width="10.6" height="34" fill="#00009f"/><rect x="1552" y="96.6" width="10.6" height="34" fill="#0000ad"/><rect x="1562.1" y="96.6" width="10.6" height="34" fill="#0000b6"/><rect x="1572.3" y="96.6" width="10.6" height="34" fill="#0000c4"/><rect x="1582.5" y="96.6" width="10.6" height="34" fill="#0000cd"/><rect x="1592.6" y="96.6" width="10.6" height="34" fill="#0000da"/><rect x="1602.8" y="96.6" width="10.6" height="34" fill="#0000da"/><rect x="1612.9" y="96.6" width="10.6" height="34" fill="#0000da"/><rect x="1623.1" y="96.6" width="10.6" height="34" fill="#0000da"/><rect x="1633.3" y="96.6" width="10.6" height="34" fill="#0000cd"/><rect x="1643.4" y="96.6" width="10.6" height="34" fill="#0000c4"/><rect x="1653.6" y="96.6" width="10.6" height="34" fill="#0000b6"/><rect x="1663.8" y="96.6" width="10.6" height="34" fill="#0000ad"/><rect x="1673.9" y="96.6" width="10.6" height="34" fill="#00009f"/><rect x="1684.1" y="96.6" width="10.6" height="34" fill="#000096"/><rect x="1694.3" y="96.6" width="10.6" height="34" fill="#000096"/><rect x="1704.4" y="96.6" width="10.6" height="34" fill="#000096"/><rect x="1511.3" y="63.1" width="10.6" height="34" fill="#000089"/><rect x="1521.5" y="63.1" width="10.6" height="34" fill="#000089"/><rect x="1531.6" y="63.1" width="10.6" height="34" fill="#000089"/><rect x="1541.8" y="63.1" width="10.6" height="34" fill="#000089"/><rect x="1552" y="63.1" width="10.6" height="34" fill="#000089"/><rect x="1562.1" y="63.1" width="10.6" height="34" fill="#000089"/><rect x="1572.3" y="63.1" width="10.6" height="34" fill="#000089"/><rect x="1582.5" y="63.1" width="10.6" height="34" fill="#000089"/><rect x="1592.6" y="63.1" width="10.6" height="34" fill="#000089"/><rect x="1602.8" y="63.1" width="10.6" height="34" fill="#000089"/><rect x="1612.9" y="63.1" width="10.6" height="34" fill="#000089"/><rect x="1623.1" y="63.1" width="10.6" height="34" fill="#000089"/><rect x="1633.3" y="63.1" width="10.6" height="34" fill="#000089"/><rect x="1643.4" y="63.1" width="10.6" height="34" fill="#000089"/><rect x="1653.6" y="63.1" width="10.6" height="34" fill="#000089"/><rect x="1663.8" y="63.1" width="10.6" height="34" fill="#000089"/><rect x="1673.9" y="63.1" width="10.6" height="34" fill="#000089"/><rect x="1684.1" y="63.1" width="10.6" height="34" fill="#000089"/><rect x="1694.3" y="63.1" width="10.6" height="34" fill="#000089"/><rect x="1704.4" y="63.1" width="10.6" height="34" fill="#000089"/><rect x="1511.3" y="29.5" width="10.6" height="34" fill="#000089"/><rect x="1521.5" y="29.5" width="10.6" height="34" fill="#000089"/><rect x="1531.6" y="29.5" width="10.6" height="34" fill="#000089"/><rect x="1541.8" y="29.5" width="10.6" height="34" fill="#000089"/><rect x="1552" y="29.5" width="10.6" height="34" fill="#000089"/><rect x="1562.1" y="29.5" width="10.6" height="34" fill="#000089"/><rect x="1572.3" y="29.5" width="10.6" height="34" fill="#000089"/><rect x="1582.5" y="29.5" width="10.6" height="34" fill="#000089"/><rect x="1592.6" y="29.5" width="10.6" height="34" fill="#000089"/><rect x="1602.8" y="29.5" width="10.6" height="34" fill="#000089"/><rect x="1612.9" y="29.5" width="10.6" height="34" fill="#000089"/><rect x="1623.1" y="29.5" width="10.6" height="34" fill="#000089"/><rect x="1633.3" y="29.5" width="10.6" height="34" fill="#000089"/><rect x="1643.4" y="29.5" width="10.6" height="34" fill="#000089"/><rect x="1653.6" y="29.5" width="10.6" height="34" fill="#000089"/><rect x="1663.8" y="29.5" width="10.6" height="34" fill="#000089"/><rect x="1673.9" y="29.5" width="10.6" height="34" fill="#000089"/><rect x="1684.1" y="29.5" width="10.6" height="34" fill="#000089"/><rect x="1694.3" y="29.5" width="10.6" height="34" fill="#000089"/><rect x="1704.4" y="29.5" width="10.6" height="34" fill="#000089"/></g>
<rect x="1511.3" y="29.5" width="203.3" height="369.3" fill="none" stroke="#000" stroke-width="1.3"/>
<path d="M1511.3 398.8v6M1562.1 398.8v6M1612.9 398.8v6M1663.8 398.8v6M1714.6 398.8v6M1511.3 382h-6M1511.3 314.9h-6M1511.3 247.7h-6M1511.3 180.6h-6M1511.3 113.4h-6M1511.3 46.3h-6" stroke="#000" stroke-width="1.3"/>
<g style="font-family:'Liberation Sans',sans-serif;font-size:16.5px" text-anchor="middle"><text x="1511.3" y="423.5">470</text><text x="1562.1" y="423.5">475</text><text x="1612.9" y="423.5">480</text><text x="1663.8" y="423.5">485</text><text x="1714.6" y="423.5">490</text></g>
<g style="font-family:'Liberation Sans',sans-serif;font-size:16.5px" text-anchor="end"><text x="1498.8" y="388">200</text><text x="1498.8" y="320.9">202</text><text x="1498.8" y="253.7">204</text><text x="1498.8" y="186.6">206</text><text x="1498.8" y="119.4">208</text><text x="1498.8" y="52.3">210</text></g>
<text style="font-family:'Liberation Sans',sans-serif;font-size:17px" text-anchor="middle" x="1612.9" y="448.5" textLength="148" lengthAdjust="spacingAndGlyphs">Time-of-flight (<tspan font-style="italic">μs</tspan>)</text>
<text style="font-family:'Liberation Sans',sans-serif;font-size:17px" text-anchor="middle" transform="translate(1451.3,215.9) rotate(-90)" y="6" textLength="79" lengthAdjust="spacingAndGlyphs">Spectrum</text>
<text style="font-family:'Liberation Sans',sans-serif;font-size:20px" text-anchor="middle" x="1612.9" y="20" textLength="79.4" lengthAdjust="spacingAndGlyphs">Contour</text>
<path d="M1551.3 294.9 1555.1 300.6 1558.9 304.5 1562.8 306.6 1566.6 307.9 1570.4 309.1 1574.2 310 1578 310.7 1581.8 311.2 1585.6 311.6 1589.4 311.8 1593.3 312 1597.1 312.1 1600.9 312.2 1604.7 312.2 1608.5 312.1 1612.3 311.9 1616.1 311.6 1619.9 311.4 1623.8 311.1 1627.6 310.7 1631.4 310.1 1635.2 309.4 1639 308.4 1642.8 307.2 1646.6 305.4 1650.4 302.1 1654.2 297.2 1657.7 292.3 1660.5 288.1 1662.6 284.2 1663.1 279.5 1662 273.7 1659.8 267.3 1657.5 261 1655.1 254.8 1653 249.7 1651.2 245.9 1649.6 243.3 1647.3 240.2 1644.1 236.4 1640.3 232.3 1636.5 228.9 1632.6 226.1 1628.8 224 1625 222.5 1621.2 221.7 1617.4 221.1 1613.6 220.7 1609.8 220.4 1606 220.1 1602.1 219.9 1598.3 219.8 1594.5 219.8 1590.7 220 1586.9 220.4 1583.1 220.9 1579.3 221.7 1575.5 223.2 1571.7 225.5 1567.8 228.4 1564 231.8 1560.3 235.7 1557 239.4 1554.3 242.8 1552.1 246.4 1550.2 251 1548.6 256.6 1547.1 262.8 1545.7 269.1 1544.4 275.6 1544 280.6 1544.7 284.1 1546.5 286.9 1549.1 291.2 1551.3 294.9M1592 194.3 1595.8 196.4 1599.6 198 1603.4 199 1607.2 199.7 1611 200.1 1614.9 200.1 1618.7 200 1622.5 199.7 1626.3 199.2 1630.1 198.2 1633.9 196.7 1637.7 194.8 1641.5 192.3 1645.3 189.4 1648.3 186.7 1650.5 184.1 1652.2 181.9 1654.1 180.1 1656.2 178.7 1658.8 176.8 1661.9 174 1665.7 170.2 1669.3 165 1672.8 158.4 1675.3 151 1675.3 144.2 1672.8 137.9 1669.3 132.5 1665.7 127.9 1661.9 124.4 1658.1 121.8 1654.2 120.2 1650.4 119.3 1646.6 118.5 1642.8 117.9 1639 117.3 1635.2 116.9 1631.4 116.5 1627.6 116.3 1623.8 116.2 1619.9 116.2 1616.1 116.2 1612.3 116.3 1608.5 116.5 1604.7 116.7 1600.9 117.1 1597.1 117.5 1593.3 118 1589.4 118.8 1585.6 119.9 1581.8 121.5 1578 124.3 1574.2 128.7 1570.5 134.4 1567.6 139.3 1565.7 142.9 1564.8 146 1564.8 150.1 1565.7 155.3 1567.6 161 1570.5 167 1574.1 173 1576.9 177.2 1578.6 179.4 1579.8 180.6 1581.7 183.1 1584.3 186.8 1587.3 190.5 1590.8 193.5 1592 194.3M1561.5 293.5 1565.3 296.5 1569.1 299.2 1572.9 301.4 1576.7 303.1 1580.5 304.4 1584.4 305.1 1588.2 305.8 1592 306.3 1595.8 306.7 1599.6 307 1603.4 307 1607.2 306.9 1611 306.6 1614.9 306.2 1618.7 305.6 1622.5 304.9 1626.3 304 1630.1 302.8 1633.9 301.3 1637.7 299.5 1641.5 297.1 1645.3 294.2 1648.4 290.9 1650.9 287.2 1652.5 283 1652.5 277.9 1650.9 272 1648.4 266.1 1645.3 260.4 1641.7 255.3 1639 251.5 1637.5 249.4 1636.5 247.9 1634.6 245.3 1631.8 241.6 1628.5 238.2 1625 235.7 1621.2 234.1 1617.4 232.8 1613.6 231.9 1609.8 231.2 1606 230.7 1602.1 230.5 1598.3 230.6 1594.5 230.9 1590.7 231.5 1586.9 232.2 1583.1 233.2 1579.3 234.7 1575.7 237.7 1572.3 242.1 1569.6 245.9 1568.1 248.3 1567.4 249.5 1565.7 252.4 1562.8 257.3 1559.2 263.4 1556.5 269.3 1554.7 274.9 1553.9 279.8 1554.3 283.8 1555.8 287.1 1558.2 290.3 1561.5 293.5 1561.5 293.5M1581.8 161.8 1585.6 166.8 1589.4 170.5 1593.3 172.8 1597.1 174.6 1600.9 176.2 1604.7 177.6 1608.5 178.5 1612.3 179 1616.1 179 1619.9 179 1623.8 179 1627.6 178.8 1631.4 178.1 1635.2 177.1 1639 175.7 1642.8 173.9 1646.6 171.8 1650.4 169.4 1654.2 166.5 1657.8 162.8 1661.1 157.9 1663.9 152.1 1664.6 146.4 1663.1 141 1660.1 136.3 1656.7 132.8 1653 130.4 1649.2 128.6 1645.4 126.9 1641.5 125.5 1637.7 124.4 1633.9 123.6 1630.1 123 1626.3 122.6 1622.5 122.4 1618.7 122.4 1614.9 122.6 1611 123 1607.2 123.6 1603.4 124.5 1599.6 125.6 1595.8 126.8 1592 128.1 1588.2 130.1 1584.4 133.2 1580.7 137.2 1577.8 140.6 1576 143.4 1575.1 145.9 1575.1 148.7 1576 151.7 1577.8 155.5 1580.7 160.1 1581.8 161.8M1571.7 292 1575.5 294.9 1579.3 297.1 1583.1 298.5 1586.9 299.5 1590.7 300.4 1594.5 301.1 1598.3 301.6 1602.1 301.8 1606 301.8 1609.8 301.4 1613.6 300.8 1617.4 300 1621.2 298.9 1625 297.6 1628.8 295.9 1632.6 293.8 1636.4 291.3 1639.8 288.5 1643 285.2 1644.6 281.3 1643.8 276.5 1640.9 270.9 1637.6 265.2 1633.9 259.5 1630.4 254.3 1627.6 250.8 1625.7 249.1 1623.9 247.9 1621.9 246.7 1619.7 245.5 1617 244.3 1613.6 243.1 1609.8 242 1606 241.3 1602.1 241.1 1598.3 241.3 1594.5 241.9 1590.7 242.9 1586.9 244.1 1583.2 245.5 1579.9 246.8 1578 247.6 1577.4 247.8 1576.4 249.7 1574 254.6 1570.4 261.9 1567.2 268.6 1564.5 274.1 1562.7 278.6 1562.7 282.3 1564.5 285.2 1567.2 288 1570.4 290.9 1571.7 292M1592 159.1 1595.8 161.9 1599.6 164.5 1603.4 166.9 1607.2 168.9 1611 170.1 1614.9 170.7 1618.7 171 1622.5 171 1626.3 170.6 1630.1 169.8 1633.9 168.6 1637.7 166.8 1641.5 164.5 1645.4 161.6 1649.2 158.3 1653 154.7 1656.4 151.2 1658.4 148.9 1659.2 147.8 1659.4 147.1 1659.3 146.5 1658.8 145.8 1657.2 144.3 1654.2 141.9 1650.4 139 1646.6 136.4 1642.8 134.1 1639 132.2 1635.2 130.8 1631.4 129.8 1627.6 129.1 1623.8 128.7 1619.9 128.6 1616.1 128.8 1612.3 129.3 1608.5 130.2 1604.7 131.6 1600.9 133.4 1597.1 135.3 1593.3 137.3 1589.7 139.4 1586.8 141.7 1584.7 144.1 1583.8 146.8 1584.2 149.8 1586 153 1588.7 156.2 1592 159.1 1592 159.1M1581.8 291.5 1585.6 292.9 1589.4 294.2 1593.3 295.4 1597.1 296.2 1600.9 296.6 1604.7 296.6 1608.5 296.3 1612.3 295.6 1616.1 294.6 1619.9 293.3 1623.8 291.6 1627.5 289.5 1631.3 286.9 1634.7 283.7 1635.6 279.5 1633.8 274.1 1630 268.4 1626.3 263.6 1622.5 259.8 1618.7 256.9 1614.9 254.6 1611 253 1607.2 251.9 1603.4 251.5 1599.6 251.7 1595.8 252.5 1592 254 1588.2 255.8 1584.4 258.1 1580.6 260.9 1577.1 265.1 1573.8 270.9 1571.5 277.4 1571.5 282.4 1573.8 286.1 1577.1 288.9 1580.6 291 1581.8 291.5M1602.1 155.5 1606 158.6 1609.8 160.8 1613.6 162.1 1617.4 162.8 1621.2 162.9 1625 162.6 1628.8 161.7 1632.6 160.3 1636.5 158.3 1640.3 155.5 1644.1 151.9 1647 149 1648.5 147.5 1648.8 147.1 1648.9 147 1648.8 146.8 1648.2 146.4 1646.2 144.8 1642.8 142.2 1639 139.6 1635.2 137.7 1631.4 136.4 1627.6 135.5 1623.8 134.9 1619.9 134.8 1616.1 135 1612.3 135.8 1608.5 137.1 1604.7 139 1601 141.4 1597.9 143.5 1595.5 145.1 1594 146.4 1594 147.9 1595.5 149.6 1597.9 151.7 1601 154.5 1602.1 155.5M1581.8 285 1585.6 286.7 1589.4 288.3 1593.3 289.8 1597.1 290.9 1600.9 291.4 1604.7 291.4 1608.5 291 1612.3 290.2 1616.1 289 1619.9 287.3 1623.8 285.1 1626.7 283.2 1628.5 282.1 1629.1 281.6 1629.2 281.1 1628.9 280.4 1628 279.1 1625.9 276.4 1622.5 272.4 1618.7 268.5 1614.9 265.5 1611 263.4 1607.2 262.1 1603.4 261.6 1599.6 261.9 1595.8 263.1 1592 265.3 1588.2 268.1 1584.4 271.3 1580.7 274.8 1578.1 277.6 1576.7 279.4 1576.3 280.6 1576.3 281.5 1576.7 282.2 1578.1 283.1 1580.7 284.4 1581.8 285M1612.3 153.2 1616.1 154.4 1619.9 154.9 1623.8 154.6 1627.6 153.7 1631.4 152.2 1635 150.2 1637.6 148.7 1639 147.8 1639.4 147.3 1639.4 146.8 1639 146.4 1637.6 145.7 1635 144.5 1631.4 143 1627.6 141.9 1623.8 141.2 1619.9 140.9 1616.1 141.3 1612.3 142.3 1609 143.4 1606.5 144.7 1604.9 146 1604.4 147.4 1605.3 149 1607.3 150.7 1610 152.2 1612.3 153.2M1592 283.7 1595.8 285.2 1599.6 286.1 1603.4 286.3 1607.2 286 1611 285.2 1614.7 283.9 1617.5 282.9 1619.1 282.2 1619.8 281.5 1619.8 280.7 1619.1 279.6 1617.5 278.1 1614.7 276.2 1611 273.8 1607.2 272.3 1603.4 271.6 1599.6 272 1595.8 273.7 1592 276.7 1589.1 279.3 1587.5 280.7 1587.1 281.1 1587 281.3 1587.1 281.4 1587.8 281.8 1589.9 282.7 1592 283.7M1619.3 147.3 1620 147.1 1620 146.9 1619.3 146.8 1618.4 146.7 1617.7 146.8 1617.3 146.9 1617.2 147 1617.4 147.2 1617.9 147.3 1618.6 147.3 1619.3 147.3" fill="none" stroke="#fff" stroke-opacity="0.55" stroke-width="1.6"/>
<defs><linearGradient id="jetg" x1="0" y1="1" x2="0" y2="0"><stop offset="0.0000" stop-color="#000080"/><stop offset="0.0625" stop-color="#0000c8"/><stop offset="0.1250" stop-color="#0000ff"/><stop offset="0.1875" stop-color="#0040ff"/><stop offset="0.2500" stop-color="#0080ff"/><stop offset="0.3125" stop-color="#00c0ff"/><stop offset="0.3750" stop-color="#16ffe1"/><stop offset="0.4375" stop-color="#49ffad"/><stop offset="0.5000" stop-color="#7dff7a"/><stop offset="0.5625" stop-color="#b1ff46"/><stop offset="0.6250" stop-color="#e4ff13"/><stop offset="0.6875" stop-color="#ffd000"/><stop offset="0.7500" stop-color="#ff9400"/><stop offset="0.8125" stop-color="#ff5900"/><stop offset="0.8750" stop-color="#ff1e00"/><stop offset="0.9375" stop-color="#c40000"/><stop offset="1.0000" stop-color="#800000"/></linearGradient></defs>
<rect x="1727.7" y="29.5" width="17.5" height="369.3" fill="url(#jetg)" stroke="#000" stroke-width="1.3"/>
<path d="M1745.2 398.8h6M1745.2 328.1h6M1745.2 257.4h6M1745.2 186.6h6M1745.2 115.9h6M1745.2 45.2h6" stroke="#000" stroke-width="1.3"/>
<g style="font-family:'Liberation Sans',sans-serif;font-size:16.5px"><text x="1757.5" y="404.8">0</text><text x="1757.5" y="334.1">2000</text><text x="1757.5" y="263.4">4000</text><text x="1757.5" y="192.6">6000</text><text x="1757.5" y="121.9">8000</text><text x="1757.5" y="51.2">10000</text></g>
<text style="font-family:'Liberation Sans',sans-serif;font-size:17px" text-anchor="middle" transform="translate(1827.5,215.9) rotate(-90)" y="6" textLength="111" lengthAdjust="spacingAndGlyphs">Counts (<tspan font-style="italic">μs</tspan>)<tspan dy="-7" font-size="12px">−1</tspan></text>
<polygon points="1139.6,704.1 1239.3,636.2 1237.6,506 1134.1,565.3" fill="#f9f9f9" stroke="#ececec" stroke-width="1"/>
<polygon points="1239.3,636.2 1397.5,674.2 1401.3,541 1237.6,506" fill="#f2f2f2" stroke="#ececec" stroke-width="1"/>
<polygon points="1139.6,704.1 1307.7,747.7 1397.5,674.2 1239.3,636.2" fill="#f5f5f5" stroke="#ececec" stroke-width="1"/>
<g fill="none" stroke="#b3b3b3" stroke-width="1.2"><polyline points="1146.2,705.8 1245.5,637.7 1244.1,507.4"/><polyline points="1183.9,715.6 1281.1,646.2 1280.8,515.2"/><polyline points="1222.2,725.5 1317.1,654.9 1318.1,523.2"/><polyline points="1261.1,735.6 1353.7,663.7 1356,531.3"/><polyline points="1300.6,745.9 1390.8,672.6 1394.5,539.5"/><polyline points="1313.9,742.7 1146.5,699.4 1141.2,561.3"/><polyline points="1330.4,729.1 1164.8,686.9 1160.3,550.3"/><polyline points="1346.5,715.9 1182.7,674.7 1178.9,539.7"/><polyline points="1362.2,703.1 1200.1,662.9 1196.9,529.3"/><polyline points="1377.4,690.7 1217,651.4 1214.5,519.3"/><polyline points="1392.2,678.5 1233.4,640.2 1231.5,509.5"/><polyline points="1139.6,702.7 1239.3,634.9 1397.5,672.9"/><polyline points="1138.6,677.7 1239,611.3 1398.2,648.8"/><polyline points="1137.6,652.3 1238.7,587.5 1398.9,624.4"/><polyline points="1136.6,626.6 1238.4,563.4 1399.6,599.8"/><polyline points="1135.5,600.5 1238.1,538.9 1400.4,574.8"/><polyline points="1134.5,574.1 1237.7,514.2 1401.1,549.4"/></g>
<g stroke-width="0.6" stroke-linejoin="round"><polygon points="1235.1,645.6 1242.2,647.3 1250.3,641.7 1243.2,640" fill="#008066" stroke="#008066"/><polygon points="1242.2,647.3 1249.4,649.1 1257.4,643.4 1250.3,641.7" fill="#008066" stroke="#008066"/><polygon points="1249.4,649.1 1256.5,650.8 1264.6,645.2 1257.4,643.4" fill="#008066" stroke="#008066"/><polygon points="1256.5,650.8 1263.8,652.6 1271.7,646.9 1264.6,645.2" fill="#008066" stroke="#008066"/><polygon points="1263.8,652.6 1271,654.3 1278.9,648.6 1271.7,646.9" fill="#008066" stroke="#008066"/><polygon points="1226.8,651.2 1234,653 1242.2,647.3 1235.1,645.6" fill="#008066" stroke="#008066"/><polygon points="1271,654.3 1278.2,656.1 1286.1,650.4 1278.9,648.6" fill="#008066" stroke="#008066"/><polygon points="1234,653 1241.2,654.8 1249.4,649.1 1242.2,647.3" fill="#008066" stroke="#008066"/><polygon points="1278.2,656.1 1285.5,657.8 1293.4,652.1 1286.1,650.4" fill="#008066" stroke="#008066"/><polygon points="1241.2,654.8 1248.4,654 1256.5,650.8 1249.4,649.1" fill="#018066" stroke="#018066"/><polygon points="1285.5,657.8 1292.8,659.6 1300.6,653.9 1293.4,652.1" fill="#008066" stroke="#008066"/><polygon points="1248.4,654 1255.6,654.5 1263.8,652.6 1256.5,650.8" fill="#048266" stroke="#048266"/><polygon points="1292.8,659.6 1300.1,661.4 1307.9,655.6 1300.6,653.9" fill="#008066" stroke="#008066"/><polygon points="1255.6,654.5 1262.9,655.1 1271,654.3 1263.8,652.6" fill="#058266" stroke="#058266"/><polygon points="1300.1,661.4 1307.4,663.2 1315.2,657.4 1307.9,655.6" fill="#008066" stroke="#008066"/><polygon points="1218.5,657 1225.7,658.8 1234,653 1226.8,651.2" fill="#008066" stroke="#008066"/><polygon points="1307.4,663.2 1314.8,664.9 1322.5,659.1 1315.2,657.4" fill="#008066" stroke="#008066"/><polygon points="1262.9,655.1 1270.2,655.6 1278.2,656.1 1271,654.3" fill="#078366" stroke="#078366"/><polygon points="1225.7,658.8 1232.9,659.3 1241.2,654.8 1234,653" fill="#008066" stroke="#008066"/><polygon points="1314.8,664.9 1322.2,666.7 1329.9,660.9 1322.5,659.1" fill="#008066" stroke="#008066"/><polygon points="1270.2,655.6 1277.5,656.1 1285.5,657.8 1278.2,656.1" fill="#098466" stroke="#098466"/><polygon points="1232.9,659.3 1240.1,659.8 1248.4,654 1241.2,654.8" fill="#048266" stroke="#048266"/><polygon points="1322.2,666.7 1329.6,668.5 1337.2,662.7 1329.9,660.9" fill="#008066" stroke="#008066"/><polygon points="1277.5,656.1 1284.8,656.6 1292.8,659.6 1285.5,657.8" fill="#0b8566" stroke="#0b8566"/><polygon points="1240.1,659.8 1247.3,654.1 1255.6,654.5 1248.4,654" fill="#0c8666" stroke="#0c8666"/><polygon points="1329.6,668.5 1337,670.3 1344.6,664.5 1337.2,662.7" fill="#008066" stroke="#008066"/><polygon points="1284.8,656.6 1292.2,658.4 1300.1,661.4 1292.8,659.6" fill="#0b8566" stroke="#0b8566"/><polygon points="1210,662.8 1217.3,664.6 1225.7,658.8 1218.5,657" fill="#008066" stroke="#008066"/><polygon points="1337,670.3 1344.4,672.1 1352,666.2 1344.6,664.5" fill="#008066" stroke="#008066"/><polygon points="1292.2,658.4 1299.6,660.2 1307.4,663.2 1300.1,661.4" fill="#0b8566" stroke="#0b8566"/><polygon points="1217.3,664.6 1224.5,666.4 1232.9,659.3 1225.7,658.8" fill="#008066" stroke="#008066"/><polygon points="1247.3,654.1 1254.6,645.7 1262.9,655.1 1255.6,654.5" fill="#1a8c66" stroke="#1a8c66"/><polygon points="1344.4,672.1 1351.9,673.9 1359.4,668 1352,666.2" fill="#008066" stroke="#008066"/><polygon points="1299.6,660.2 1307,662 1314.8,664.9 1307.4,663.2" fill="#0b8566" stroke="#0b8566"/><polygon points="1224.5,666.4 1231.8,665.7 1240.1,659.8 1232.9,659.3" fill="#048266" stroke="#048266"/><polygon points="1351.9,673.9 1359.4,675.8 1366.9,669.8 1359.4,668" fill="#008066" stroke="#008066"/><polygon points="1307,662 1314.4,665.1 1322.2,666.7 1314.8,664.9" fill="#0b8566" stroke="#0b8566"/><polygon points="1359.4,675.8 1366.9,677.6 1374.3,671.6 1366.9,669.8" fill="#008066" stroke="#008066"/><polygon points="1314.4,665.1 1321.9,668.2 1329.6,668.5 1322.2,666.7" fill="#098466" stroke="#098466"/><polygon points="1254.6,645.7 1261.8,625.8 1270.2,655.6 1262.9,655.1" fill="#319866" stroke="#319866"/><polygon points="1231.8,665.7 1239,662.4 1247.3,654.1 1240.1,659.8" fill="#0f8766" stroke="#0f8766"/><polygon points="1366.9,677.6 1374.4,679.4 1381.8,673.4 1374.3,671.6" fill="#008066" stroke="#008066"/><polygon points="1321.9,668.2 1329.3,671.2 1337,670.3 1329.6,668.5" fill="#078366" stroke="#078366"/><polygon points="1201.4,668.7 1208.7,670.5 1217.3,664.6 1210,662.8" fill="#008066" stroke="#008066"/><polygon points="1329.3,671.2 1336.8,674.3 1344.4,672.1 1337,670.3" fill="#058266" stroke="#058266"/><polygon points="1208.7,670.5 1216,672.3 1224.5,666.4 1217.3,664.6" fill="#008066" stroke="#008066"/><polygon points="1336.8,674.3 1344.3,677.4 1351.9,673.9 1344.4,672.1" fill="#048266" stroke="#048266"/><polygon points="1239,662.4 1246.3,659.2 1254.6,645.7 1247.3,654.1" fill="#229066" stroke="#229066"/><polygon points="1261.8,625.8 1269.1,604.3 1277.5,656.1 1270.2,655.6" fill="#51a866" stroke="#51a866"/><polygon points="1216,672.3 1223.3,672.9 1231.8,665.7 1224.5,666.4" fill="#028066" stroke="#028066"/><polygon points="1344.3,677.4 1351.8,680.5 1359.4,675.8 1351.9,673.9" fill="#028066" stroke="#028066"/><polygon points="1351.8,680.5 1359.4,682.4 1366.9,677.6 1359.4,675.8" fill="#018066" stroke="#018066"/><polygon points="1223.3,672.9 1230.7,672.2 1239,662.4 1231.8,665.7" fill="#0a8466" stroke="#0a8466"/><polygon points="1246.3,659.2 1253.7,658.4 1261.8,625.8 1254.6,645.7" fill="#3c9e66" stroke="#3c9e66"/><polygon points="1359.4,682.4 1367,684.2 1374.4,679.4 1366.9,677.6" fill="#018066" stroke="#018066"/><polygon points="1192.7,674.7 1200,674 1208.7,670.5 1201.4,668.7" fill="#018066" stroke="#018066"/><polygon points="1269.1,604.3 1276.5,591.7 1284.8,656.6 1277.5,656.1" fill="#6bb566" stroke="#6bb566"/><polygon points="1230.7,672.2 1238,672.7 1246.3,659.2 1239,662.4" fill="#138966" stroke="#138966"/><polygon points="1200,674 1207.3,672 1216,672.3 1208.7,670.5" fill="#058266" stroke="#058266"/><polygon points="1238,672.7 1245.4,673.3 1253.7,658.4 1246.3,659.2" fill="#1a8c66" stroke="#1a8c66"/><polygon points="1276.5,591.7 1284.1,572.3 1292.2,658.4 1284.8,656.6" fill="#83c166" stroke="#83c166"/><polygon points="1207.3,672 1214.5,666.1 1223.3,672.9 1216,672.3" fill="#0e8666" stroke="#0e8666"/><polygon points="1253.7,658.4 1261.1,653.9 1269.1,604.3 1261.8,625.8" fill="#60b066" stroke="#60b066"/><polygon points="1336.7,670.7 1344.2,681.5 1351.8,680.5 1344.3,677.4" fill="#118866" stroke="#118866"/><polygon points="1329.3,654.8 1336.7,670.7 1344.3,677.4 1336.8,674.3" fill="#229066" stroke="#229066"/><polygon points="1245.4,673.3 1252.8,673.9 1261.1,653.9 1253.7,658.4" fill="#229066" stroke="#229066"/><polygon points="1344.2,681.5 1351.7,687.2 1359.4,682.4 1351.8,680.5" fill="#078366" stroke="#078366"/><polygon points="1322,625.8 1329.3,654.8 1336.8,674.3 1329.3,671.2" fill="#3f9f66" stroke="#3f9f66"/><polygon points="1351.7,687.2 1359.3,690.3 1367,684.2 1359.4,682.4" fill="#048266" stroke="#048266"/><polygon points="1214.5,666.1 1221.8,660.3 1230.7,672.2 1223.3,672.9" fill="#1b8d66" stroke="#1b8d66"/><polygon points="1183.9,680.7 1191.2,678.7 1200,674 1192.7,674.7" fill="#048266" stroke="#048266"/><polygon points="1284.1,572.3 1291.7,563.3 1299.6,660.2 1292.2,658.4" fill="#97cb66" stroke="#97cb66"/><polygon points="1252.8,673.9 1260.3,675.7 1268.5,650.5 1261.1,653.9" fill="#2a9466" stroke="#2a9466"/><polygon points="1314.5,607 1322,625.8 1329.3,671.2 1321.9,668.2" fill="#5dae66" stroke="#5dae66"/><polygon points="1306.9,584.1 1314.5,607 1321.9,668.2 1314.4,665.1" fill="#78bc66" stroke="#78bc66"/><polygon points="1261.1,653.9 1268.5,650.5 1276.5,591.7 1269.1,604.3" fill="#80c066" stroke="#80c066"/><polygon points="1291.7,563.3 1299.3,569 1307,662 1299.6,660.2" fill="#9cce66" stroke="#9cce66"/><polygon points="1260.3,675.7 1267.8,678.8 1276,647.2 1268.5,650.5" fill="#309866" stroke="#309866"/><polygon points="1191.2,678.7 1198.4,672.9 1207.3,672 1200,674" fill="#108866" stroke="#108866"/><polygon points="1299.3,569 1306.9,584.1 1314.4,665.1 1307,662" fill="#90c866" stroke="#90c866"/><polygon points="1221.8,660.3 1229.1,650.5 1238,672.7 1230.7,672.2" fill="#2a9466" stroke="#2a9466"/><polygon points="1267.8,678.8 1275.3,680.7 1283.5,649 1276,647.2" fill="#339966" stroke="#339966"/><polygon points="1328.7,687.1 1336.3,691.5 1344.2,681.5 1336.7,670.7" fill="#138966" stroke="#138966"/><polygon points="1321.2,681.3 1328.7,687.1 1336.7,670.7 1329.3,654.8" fill="#279366" stroke="#279366"/><polygon points="1336.3,691.5 1344,694.7 1351.7,687.2 1344.2,681.5" fill="#088466" stroke="#088466"/><polygon points="1275.3,680.7 1282.8,683.9 1291,650.8 1283.5,649" fill="#329866" stroke="#329866"/><polygon points="1198.4,672.9 1205.6,665.7 1214.5,666.1 1207.3,672" fill="#229066" stroke="#229066"/><polygon points="1344,694.7 1351.6,696.6 1359.3,690.3 1351.7,687.2" fill="#048266" stroke="#048266"/><polygon points="1268.5,650.5 1276,647.2 1284.1,572.3 1276.5,591.7" fill="#9ece66" stroke="#9ece66"/><polygon points="1229.1,650.5 1236.3,631.4 1245.4,673.3 1238,672.7" fill="#41a066" stroke="#41a066"/><polygon points="1175,686.9 1182.4,688.7 1191.2,678.7 1183.9,680.7" fill="#028066" stroke="#028066"/><polygon points="1282.8,683.9 1290.4,687 1298.5,657.8 1291,650.8" fill="#2d9666" stroke="#2d9666"/><polygon points="1313.6,675.6 1321.2,681.3 1329.3,654.8 1322,625.8" fill="#47a366" stroke="#47a366"/><polygon points="1290.4,687 1297.9,690.2 1306.1,666.1 1298.5,657.8" fill="#239166" stroke="#239166"/><polygon points="1297.9,690.2 1305.5,692.1 1313.6,675.6 1306.1,666.1" fill="#198c66" stroke="#198c66"/><polygon points="1305.5,692.1 1313.1,695.2 1321.2,681.3 1313.6,675.6" fill="#118866" stroke="#118866"/><polygon points="1182.4,688.7 1189.8,690.6 1198.4,672.9 1191.2,678.7" fill="#0a8466" stroke="#0a8466"/><polygon points="1306.1,666.1 1313.6,675.6 1322,625.8 1314.5,607" fill="#6cb666" stroke="#6cb666"/><polygon points="1313.1,695.2 1320.7,697.1 1328.7,687.1 1321.2,681.3" fill="#0b8566" stroke="#0b8566"/><polygon points="1236.3,631.4 1243.8,626.6 1252.8,673.9 1245.4,673.3" fill="#55aa66" stroke="#55aa66"/><polygon points="1276,647.2 1283.5,649 1291.7,563.3 1284.1,572.3" fill="#b6db66" stroke="#b6db66"/><polygon points="1320.7,697.1 1328.4,699 1336.3,691.5 1328.7,687.1" fill="#068266" stroke="#068266"/><polygon points="1205.6,665.7 1212.6,641.5 1221.8,660.3 1214.5,666.1" fill="#44a266" stroke="#44a266"/><polygon points="1298.5,657.8 1306.1,666.1 1314.5,607 1306.9,584.1" fill="#8ec666" stroke="#8ec666"/><polygon points="1189.8,690.6 1197.2,689.9 1205.6,665.7 1198.4,672.9" fill="#178b66" stroke="#178b66"/><polygon points="1328.4,699 1336.1,700.9 1344,694.7 1336.3,691.5" fill="#048266" stroke="#048266"/><polygon points="1283.5,649 1291,650.8 1299.3,569 1291.7,563.3" fill="#badc66" stroke="#badc66"/><polygon points="1291,650.8 1298.5,657.8 1306.9,584.1 1299.3,569" fill="#acd666" stroke="#acd666"/><polygon points="1243.8,626.6 1251.3,623.2 1260.3,675.7 1252.8,673.9" fill="#5dae66" stroke="#5dae66"/><polygon points="1336.1,700.9 1343.8,702.9 1351.6,696.6 1344,694.7" fill="#038166" stroke="#038166"/><polygon points="1165.9,693.1 1173.3,695 1182.4,688.7 1175,686.9" fill="#008066" stroke="#008066"/><polygon points="1251.3,623.2 1259,625 1267.8,678.8 1260.3,675.7" fill="#60b066" stroke="#60b066"/><polygon points="1282.1,664.7 1289.7,678.3 1297.9,690.2 1290.4,687" fill="#279366" stroke="#279366"/><polygon points="1289.7,678.3 1297.4,689.3 1305.5,692.1 1297.9,690.2" fill="#188c66" stroke="#188c66"/><polygon points="1173.3,695 1180.8,695.6 1189.8,690.6 1182.4,688.7" fill="#008066" stroke="#008066"/><polygon points="1297.4,689.3 1305,697.7 1313.1,695.2 1305.5,692.1" fill="#0d8666" stroke="#0d8666"/><polygon points="1259,625 1266.7,633.4 1275.3,680.7 1267.8,678.8" fill="#5bad66" stroke="#5bad66"/><polygon points="1274.4,644.5 1282.1,664.7 1290.4,687 1282.8,683.9" fill="#3c9e66" stroke="#3c9e66"/><polygon points="1266.7,633.4 1274.4,644.5 1282.8,683.9 1275.3,680.7" fill="#50a866" stroke="#50a866"/><polygon points="1197.2,689.9 1204.6,690.6 1212.6,641.5 1205.6,665.7" fill="#309866" stroke="#309866"/><polygon points="1305,697.7 1312.7,702.2 1320.7,697.1 1313.1,695.2" fill="#068266" stroke="#068266"/><polygon points="1212.6,641.5 1219.7,622.2 1229.1,650.5 1221.8,660.3" fill="#6fb766" stroke="#6fb766"/><polygon points="1180.8,695.6 1188.2,697.5 1197.2,689.9 1189.8,690.6" fill="#038166" stroke="#038166"/><polygon points="1312.7,702.2 1320.4,705.4 1328.4,699 1320.7,697.1" fill="#048266" stroke="#048266"/><polygon points="1188.2,697.5 1195.8,699.4 1204.6,690.6 1197.2,689.9" fill="#058266" stroke="#058266"/><polygon points="1320.4,705.4 1328.1,707.3 1336.1,700.9 1328.4,699" fill="#038166" stroke="#038166"/><polygon points="1328.1,707.3 1335.8,709.3 1343.8,702.9 1336.1,700.9" fill="#038166" stroke="#038166"/><polygon points="1195.8,699.4 1203.3,700.1 1212.1,691.2 1204.6,690.6" fill="#088466" stroke="#088466"/><polygon points="1204.6,690.6 1212.1,691.2 1219.7,622.2 1212.6,641.5" fill="#51a866" stroke="#51a866"/><polygon points="1156.7,699.4 1164,697.4 1173.3,695 1165.9,693.1" fill="#028066" stroke="#028066"/><polygon points="1203.3,700.1 1210.8,702 1219.6,691.8 1212.1,691.2" fill="#0b8566" stroke="#0b8566"/><polygon points="1164,697.4 1171.5,698.1 1180.8,695.6 1173.3,695" fill="#068266" stroke="#068266"/><polygon points="1219.7,622.2 1226.9,594.6 1236.3,631.4 1229.1,650.5" fill="#a5d266" stroke="#a5d266"/><polygon points="1210.8,702 1218.4,703.9 1227.1,692.4 1219.6,691.8" fill="#0c8666" stroke="#0c8666"/><polygon points="1296.8,696.2 1304.5,704.7 1312.7,702.2 1305,697.7" fill="#118866" stroke="#118866"/><polygon points="1289.1,683.8 1296.8,696.2 1305,697.7 1297.4,689.3" fill="#229066" stroke="#229066"/><polygon points="1171.5,698.1 1179,698.7 1188.2,697.5 1180.8,695.6" fill="#098466" stroke="#098466"/><polygon points="1304.5,704.7 1312.2,710.5 1320.4,705.4 1312.7,702.2" fill="#088466" stroke="#088466"/><polygon points="1218.4,703.9 1226,705.9 1234.7,694.3 1227.1,692.4" fill="#0d8666" stroke="#0d8666"/><polygon points="1212.1,691.2 1219.6,691.8 1226.9,594.6 1219.7,622.2" fill="#73b966" stroke="#73b966"/><polygon points="1312.2,710.5 1320,713.8 1328.1,707.3 1320.4,705.4" fill="#048266" stroke="#048266"/><polygon points="1179,698.7 1186.5,698 1195.8,699.4 1188.2,697.5" fill="#0b8566" stroke="#0b8566"/><polygon points="1281.3,654.3 1289.1,683.8 1297.4,689.3 1289.7,678.3" fill="#45a266" stroke="#45a266"/><polygon points="1226,705.9 1233.6,707.8 1242.3,696.2 1234.7,694.3" fill="#0d8666" stroke="#0d8666"/><polygon points="1320,713.8 1327.8,715.7 1335.8,709.3 1328.1,707.3" fill="#038166" stroke="#038166"/><polygon points="1186.5,698 1194,697.3 1203.3,700.1 1195.8,699.4" fill="#108866" stroke="#108866"/><polygon points="1233.6,707.8 1241.3,709.8 1249.9,699.5 1242.3,696.2" fill="#0c8666" stroke="#0c8666"/><polygon points="1273.5,629.7 1281.3,654.3 1289.7,678.3 1282.1,664.7" fill="#74ba66" stroke="#74ba66"/><polygon points="1226.9,594.6 1234.3,580.1 1243.8,626.6 1236.3,631.4" fill="#d4ea66" stroke="#d4ea66"/><polygon points="1241.3,709.8 1249,711.8 1257.6,701.4 1249.9,699.5" fill="#0b8566" stroke="#0b8566"/><polygon points="1194,697.3 1201.6,698 1210.8,702 1203.3,700.1" fill="#138966" stroke="#138966"/><polygon points="1219.6,691.8 1227.1,692.4 1234.3,580.1 1226.9,594.6" fill="#91c866" stroke="#91c866"/><polygon points="1280.7,711.1 1288.4,713.1 1296.8,696.2 1289.1,683.8" fill="#1b8d66" stroke="#1b8d66"/><polygon points="1288.4,713.1 1296.2,716.4 1304.5,704.7 1296.8,696.2" fill="#0f8766" stroke="#0f8766"/><polygon points="1249,711.8 1256.7,715 1265.3,704.6 1257.6,701.4" fill="#0a8466" stroke="#0a8466"/><polygon points="1273,707.9 1280.7,711.1 1289.1,683.8 1281.3,654.3" fill="#349a66" stroke="#349a66"/><polygon points="1296.2,716.4 1304,718.4 1312.2,710.5 1304.5,704.7" fill="#078366" stroke="#078366"/><polygon points="1201.6,698 1209.2,698.6 1218.4,703.9 1210.8,702" fill="#158a66" stroke="#158a66"/><polygon points="1256.7,715 1264.4,717 1273,707.9 1265.3,704.6" fill="#078366" stroke="#078366"/><polygon points="1265.6,604.9 1273.5,629.7 1282.1,664.7 1274.4,644.5" fill="#a4d266" stroke="#a4d266"/><polygon points="1304,718.4 1311.8,720.3 1320,713.8 1312.2,710.5" fill="#048266" stroke="#048266"/><polygon points="1209.2,698.6 1216.9,700.6 1226,705.9 1218.4,703.9" fill="#168a66" stroke="#168a66"/><polygon points="1265.3,704.6 1273,707.9 1281.3,654.3 1273.5,629.7" fill="#57ab66" stroke="#57ab66"/><polygon points="1227.1,692.4 1234.7,694.3 1241.9,564 1234.3,580.1" fill="#a8d366" stroke="#a8d366"/><polygon points="1264.4,717 1272.2,719 1280.7,711.1 1273,707.9" fill="#058266" stroke="#058266"/><polygon points="1234.3,580.1 1241.9,564 1251.3,623.2 1243.8,626.6" fill="#f1f866" stroke="#f1f866"/><polygon points="1311.8,720.3 1319.6,722.3 1327.8,715.7 1320,713.8" fill="#038166" stroke="#038166"/><polygon points="1216.9,700.6 1224.6,703.9 1233.6,707.8 1226,705.9" fill="#158a66" stroke="#158a66"/><polygon points="1257.6,701.4 1265.3,704.6 1273.5,629.7 1265.6,604.9" fill="#75ba66" stroke="#75ba66"/><polygon points="1272.2,719 1280,721 1288.4,713.1 1280.7,711.1" fill="#058266" stroke="#058266"/><polygon points="1257.6,581.3 1265.6,604.9 1274.4,644.5 1266.7,633.4" fill="#d2e866" stroke="#d2e866"/><polygon points="1224.6,703.9 1232.4,707.1 1241.3,709.8 1233.6,707.8" fill="#138966" stroke="#138966"/><polygon points="1249.9,699.5 1257.6,701.4 1265.6,604.9 1257.6,581.3" fill="#92c866" stroke="#92c866"/><polygon points="1234.7,694.3 1242.3,696.2 1249.7,565.8 1241.9,564" fill="#b3d966" stroke="#b3d966"/><polygon points="1280,721 1287.8,724.3 1296.2,716.4 1288.4,713.1" fill="#038166" stroke="#038166"/><polygon points="1242.3,696.2 1249.9,699.5 1257.6,581.3 1249.7,565.8" fill="#a9d466" stroke="#a9d466"/><polygon points="1241.9,564 1249.7,565.8 1259,625 1251.3,623.2" fill="#ffff66" stroke="#ffff66"/><polygon points="1249.7,565.8 1257.6,581.3 1266.7,633.4 1259,625" fill="#f3f966" stroke="#f3f966"/><polygon points="1232.4,707.1 1240.1,710.4 1249,711.8 1241.3,709.8" fill="#118866" stroke="#118866"/><polygon points="1287.8,724.3 1295.6,726.3 1304,718.4 1296.2,716.4" fill="#018066" stroke="#018066"/><polygon points="1240.1,710.4 1247.9,716.4 1256.7,715 1249,711.8" fill="#0d8666" stroke="#0d8666"/><polygon points="1295.6,726.3 1303.4,728.3 1311.8,720.3 1304,718.4" fill="#018066" stroke="#018066"/><polygon points="1247.9,716.4 1255.7,719.7 1264.4,717 1256.7,715" fill="#098466" stroke="#098466"/><polygon points="1255.7,719.7 1263.5,724.3 1272.2,719 1264.4,717" fill="#068266" stroke="#068266"/><polygon points="1303.4,728.3 1311.3,730.3 1319.6,722.3 1311.8,720.3" fill="#018066" stroke="#018066"/><polygon points="1263.5,724.3 1271.4,727.7 1280,721 1272.2,719" fill="#048266" stroke="#048266"/><polygon points="1271.4,727.7 1279.2,729.7 1287.8,724.3 1280,721" fill="#028066" stroke="#028066"/><polygon points="1279.2,729.7 1287.1,731.7 1295.6,726.3 1287.8,724.3" fill="#018066" stroke="#018066"/><polygon points="1287.1,731.7 1295,733.7 1303.4,728.3 1295.6,726.3" fill="#018066" stroke="#018066"/><polygon points="1295,733.7 1302.9,735.8 1311.3,730.3 1303.4,728.3" fill="#018066" stroke="#018066"/></g>
<g fill="none" stroke="#000" stroke-width="1.3"><polyline points="1139.6,704.1 1307.7,747.7"/><polyline points="1307.7,747.7 1397.5,674.2"/><polyline points="1397.5,674.2 1401.3,541"/><polyline points="1148.6,704.2 1143,708"/><polyline points="1186.2,713.9 1180.7,717.9"/><polyline points="1224.5,723.8 1219.1,727.9"/><polyline points="1263.3,733.9 1258,738"/><polyline points="1302.8,744.2 1297.6,748.3"/><polyline points="1310.7,741.9 1318.7,743.9"/><polyline points="1327.3,728.3 1335.2,730.3"/><polyline points="1343.4,715.1 1351.2,717.1"/><polyline points="1359.1,702.3 1366.8,704.3"/><polyline points="1374.4,689.9 1382,691.8"/><polyline points="1389.2,677.8 1396.7,679.6"/><polyline points="1394.5,672.2 1402,674"/><polyline points="1395.2,648.1 1402.7,649.9"/><polyline points="1395.9,623.7 1403.5,625.5"/><polyline points="1396.6,599.1 1404.2,600.8"/><polyline points="1397.3,574.1 1405,575.8"/><polyline points="1398,548.8 1405.7,550.4"/></g>
<g style="font-family:'Liberation Sans',sans-serif;font-size:17px" text-anchor="middle" fill="#000"><text x="1135.5" y="743.2">470</text><text x="1172.6" y="752.8">475</text><text x="1209.6" y="763.6">480</text><text x="1249" y="774.3">485</text><text x="1287.2" y="785">490</text><text x="1331.4" y="777.9">200</text><text x="1348.1" y="763.6">202</text><text x="1363.7" y="750.4">204</text><text x="1379.2" y="737.3">206</text><text x="1394.7" y="724.1">208</text><text x="1409" y="711">210</text><text x="1430.6" y="558">10000</text><text x="1430.6" y="583.2">8000</text><text x="1428" y="608.3">6000</text><text x="1423.4" y="633.4">4000</text><text x="1424.6" y="657.3">2000</text><text x="1424.6" y="680">0</text></g>
<text style="font-family:'Liberation Sans',sans-serif;font-size:17px" text-anchor="middle" transform="translate(1197.2,779) rotate(15.8)" y="6" textLength="148" lengthAdjust="spacingAndGlyphs">Time-of-flight (<tspan font-style="italic">μs</tspan>)</text>
<text style="font-family:'Liberation Sans',sans-serif;font-size:17px" text-anchor="middle" transform="translate(1393.7,756.3) rotate(-38)" y="6" textLength="79" lengthAdjust="spacingAndGlyphs">Spectrum</text>
<text style="font-family:'Liberation Sans',sans-serif;font-size:17px" text-anchor="middle" transform="translate(1462.8,602) rotate(-90)" y="6" textLength="57.6" lengthAdjust="spacingAndGlyphs">Counts</text>
<text style="font-family:'Liberation Sans',sans-serif;font-size:20px" text-anchor="middle" x="1266.2" y="477.5" textLength="75" lengthAdjust="spacingAndGlyphs">Surface</text>
<polygon points="1545.6,704.1 1645.3,636.2 1643.6,506 1540.1,565.3" fill="#f9f9f9" stroke="#ececec" stroke-width="1"/>
<polygon points="1645.3,636.2 1803.5,674.2 1807.3,541 1643.6,506" fill="#f2f2f2" stroke="#ececec" stroke-width="1"/>
<polygon points="1545.6,704.1 1713.7,747.7 1803.5,674.2 1645.3,636.2" fill="#f5f5f5" stroke="#ececec" stroke-width="1"/>
<g fill="none" stroke="#b3b3b3" stroke-width="1.2"><polyline points="1552.2,705.8 1651.5,637.7 1650.1,507.4"/><polyline points="1589.9,715.6 1687.1,646.2 1686.8,515.2"/><polyline points="1628.2,725.5 1723.1,654.9 1724.1,523.2"/><polyline points="1667.1,735.6 1759.7,663.7 1762,531.3"/><polyline points="1706.6,745.9 1796.8,672.6 1800.5,539.5"/><polyline points="1719.9,742.7 1552.5,699.4 1547.2,561.3"/><polyline points="1736.4,729.1 1570.8,686.9 1566.3,550.3"/><polyline points="1752.5,715.9 1588.7,674.7 1584.9,539.7"/><polyline points="1768.2,703.1 1606.1,662.9 1602.9,529.3"/><polyline points="1783.4,690.7 1623,651.4 1620.5,519.3"/><polyline points="1798.2,678.5 1639.4,640.2 1637.5,509.5"/><polyline points="1545.6,702.7 1645.3,634.9 1803.5,672.9"/><polyline points="1544.6,677.7 1645,611.3 1804.2,648.8"/><polyline points="1543.6,652.3 1644.7,587.5 1804.9,624.4"/><polyline points="1542.6,626.6 1644.4,563.4 1805.6,599.8"/><polyline points="1541.5,600.5 1644.1,538.9 1806.4,574.8"/><polyline points="1540.5,574.1 1643.7,514.2 1807.1,549.4"/></g>
<g fill="none" stroke="#8b008b" stroke-width="2.6" stroke-linejoin="round"><polyline points="1562.7,699.4 1570,697.4 1577.5,698.1 1585,698.7 1592.5,698 1600,697.3 1607.6,698 1615.2,698.6 1622.9,700.6 1630.6,703.9 1638.4,707.1 1646.1,710.4 1653.9,716.4 1661.7,719.7 1669.5,724.3 1677.4,727.7 1685.2,729.7 1693.1,731.7 1701,733.7 1708.9,735.8"/><polyline points="1571.9,693.1 1579.3,695 1586.8,695.6 1594.2,697.5 1601.8,699.4 1609.3,700.1 1616.8,702 1624.4,703.9 1632,705.9 1639.6,707.8 1647.3,709.8 1655,711.8 1662.7,715 1670.4,717 1678.2,719 1686,721 1693.8,724.3 1701.6,726.3 1709.4,728.3 1717.3,730.3"/><polyline points="1581,686.9 1588.4,688.7 1595.8,690.6 1603.2,689.9 1610.6,690.6 1618.1,691.2 1625.6,691.8 1633.1,692.4 1640.7,694.3 1648.3,696.2 1655.9,699.5 1663.6,701.4 1671.3,704.6 1679,707.9 1686.7,711.1 1694.4,713.1 1702.2,716.4 1710,718.4 1717.8,720.3 1725.6,722.3"/><polyline points="1589.9,680.7 1597.2,678.7 1604.4,672.9 1611.6,665.7 1618.6,641.5 1625.7,622.2 1632.9,594.6 1640.3,580.1 1647.9,564 1655.7,565.8 1663.6,581.3 1671.6,604.9 1679.5,629.7 1687.3,654.3 1695.1,683.8 1702.8,696.2 1710.5,704.7 1718.2,710.5 1726,713.8 1733.8,715.7"/><polyline points="1598.7,674.7 1606,674 1613.3,672 1620.5,666.1 1627.8,660.3 1635.1,650.5 1642.3,631.4 1649.8,626.6 1657.3,623.2 1665,625 1672.7,633.4 1680.4,644.5 1688.1,664.7 1695.7,678.3 1703.4,689.3 1711,697.7 1718.7,702.2 1726.4,705.4 1734.1,707.3 1741.8,709.3"/><polyline points="1607.4,668.7 1614.7,670.5 1622,672.3 1629.3,672.9 1636.7,672.2 1644,672.7 1651.4,673.3 1658.8,673.9 1666.3,675.7 1673.8,678.8 1681.3,680.7 1688.8,683.9 1696.4,687 1703.9,690.2 1711.5,692.1 1719.1,695.2 1726.7,697.1 1734.4,699 1742.1,700.9 1749.8,702.9"/><polyline points="1616,662.8 1623.3,664.6 1630.5,666.4 1637.8,665.7 1645,662.4 1652.3,659.2 1659.7,658.4 1667.1,653.9 1674.5,650.5 1682,647.2 1689.5,649 1697,650.8 1704.5,657.8 1712.1,666.1 1719.6,675.6 1727.2,681.3 1734.7,687.1 1742.3,691.5 1750,694.7 1757.6,696.6"/><polyline points="1624.5,657 1631.7,658.8 1638.9,659.3 1646.1,659.8 1653.3,654.1 1660.6,645.7 1667.8,625.8 1675.1,604.3 1682.5,591.7 1690.1,572.3 1697.7,563.3 1705.3,569 1712.9,584.1 1720.5,607 1728,625.8 1735.3,654.8 1742.7,670.7 1750.2,681.5 1757.7,687.2 1765.3,690.3"/><polyline points="1632.8,651.2 1640,653 1647.2,654.8 1654.4,654 1661.6,654.5 1668.9,655.1 1676.2,655.6 1683.5,656.1 1690.8,656.6 1698.2,658.4 1705.6,660.2 1713,662 1720.4,665.1 1727.9,668.2 1735.3,671.2 1742.8,674.3 1750.3,677.4 1757.8,680.5 1765.4,682.4 1773,684.2"/><polyline points="1641.1,645.6 1648.2,647.3 1655.4,649.1 1662.5,650.8 1669.8,652.6 1677,654.3 1684.2,656.1 1691.5,657.8 1698.8,659.6 1706.1,661.4 1713.4,663.2 1720.8,664.9 1728.2,666.7 1735.6,668.5 1743,670.3 1750.4,672.1 1757.9,673.9 1765.4,675.8 1772.9,677.6 1780.4,679.4"/><polyline points="1649.2,640 1656.3,641.7 1663.4,643.4 1670.6,645.2 1677.7,646.9 1684.9,648.6 1692.1,650.4 1699.4,652.1 1706.6,653.9 1713.9,655.6 1721.2,657.4 1728.5,659.1 1735.9,660.9 1743.2,662.7 1750.6,664.5 1758,666.2 1765.4,668 1772.9,669.8 1780.3,671.6 1787.8,673.4"/><polyline points="1562.7,699.4 1571.9,693.1 1581,686.9 1589.9,680.7 1598.7,674.7 1607.4,668.7 1616,662.8 1624.5,657 1632.8,651.2 1641.1,645.6 1649.2,640"/><polyline points="1570,697.4 1579.3,695 1588.4,688.7 1597.2,678.7 1606,674 1614.7,670.5 1623.3,664.6 1631.7,658.8 1640,653 1648.2,647.3 1656.3,641.7"/><polyline points="1577.5,698.1 1586.8,695.6 1595.8,690.6 1604.4,672.9 1613.3,672 1622,672.3 1630.5,666.4 1638.9,659.3 1647.2,654.8 1655.4,649.1 1663.4,643.4"/><polyline points="1585,698.7 1594.2,697.5 1603.2,689.9 1611.6,665.7 1620.5,666.1 1629.3,672.9 1637.8,665.7 1646.1,659.8 1654.4,654 1662.5,650.8 1670.6,645.2"/><polyline points="1592.5,698 1601.8,699.4 1610.6,690.6 1618.6,641.5 1627.8,660.3 1636.7,672.2 1645,662.4 1653.3,654.1 1661.6,654.5 1669.8,652.6 1677.7,646.9"/><polyline points="1600,697.3 1609.3,700.1 1618.1,691.2 1625.7,622.2 1635.1,650.5 1644,672.7 1652.3,659.2 1660.6,645.7 1668.9,655.1 1677,654.3 1684.9,648.6"/><polyline points="1607.6,698 1616.8,702 1625.6,691.8 1632.9,594.6 1642.3,631.4 1651.4,673.3 1659.7,658.4 1667.8,625.8 1676.2,655.6 1684.2,656.1 1692.1,650.4"/><polyline points="1615.2,698.6 1624.4,703.9 1633.1,692.4 1640.3,580.1 1649.8,626.6 1658.8,673.9 1667.1,653.9 1675.1,604.3 1683.5,656.1 1691.5,657.8 1699.4,652.1"/><polyline points="1622.9,700.6 1632,705.9 1640.7,694.3 1647.9,564 1657.3,623.2 1666.3,675.7 1674.5,650.5 1682.5,591.7 1690.8,656.6 1698.8,659.6 1706.6,653.9"/><polyline points="1630.6,703.9 1639.6,707.8 1648.3,696.2 1655.7,565.8 1665,625 1673.8,678.8 1682,647.2 1690.1,572.3 1698.2,658.4 1706.1,661.4 1713.9,655.6"/><polyline points="1638.4,707.1 1647.3,709.8 1655.9,699.5 1663.6,581.3 1672.7,633.4 1681.3,680.7 1689.5,649 1697.7,563.3 1705.6,660.2 1713.4,663.2 1721.2,657.4"/><polyline points="1646.1,710.4 1655,711.8 1663.6,701.4 1671.6,604.9 1680.4,644.5 1688.8,683.9 1697,650.8 1705.3,569 1713,662 1720.8,664.9 1728.5,659.1"/><polyline points="1653.9,716.4 1662.7,715 1671.3,704.6 1679.5,629.7 1688.1,664.7 1696.4,687 1704.5,657.8 1712.9,584.1 1720.4,665.1 1728.2,666.7 1735.9,660.9"/><polyline points="1661.7,719.7 1670.4,717 1679,707.9 1687.3,654.3 1695.7,678.3 1703.9,690.2 1712.1,666.1 1720.5,607 1727.9,668.2 1735.6,668.5 1743.2,662.7"/><polyline points="1669.5,724.3 1678.2,719 1686.7,711.1 1695.1,683.8 1703.4,689.3 1711.5,692.1 1719.6,675.6 1728,625.8 1735.3,671.2 1743,670.3 1750.6,664.5"/><polyline points="1677.4,727.7 1686,721 1694.4,713.1 1702.8,696.2 1711,697.7 1719.1,695.2 1727.2,681.3 1735.3,654.8 1742.8,674.3 1750.4,672.1 1758,666.2"/><polyline points="1685.2,729.7 1693.8,724.3 1702.2,716.4 1710.5,704.7 1718.7,702.2 1726.7,697.1 1734.7,687.1 1742.7,670.7 1750.3,677.4 1757.9,673.9 1765.4,668"/><polyline points="1693.1,731.7 1701.6,726.3 1710,718.4 1718.2,710.5 1726.4,705.4 1734.4,699 1742.3,691.5 1750.2,681.5 1757.8,680.5 1765.4,675.8 1772.9,669.8"/><polyline points="1701,733.7 1709.4,728.3 1717.8,720.3 1726,713.8 1734.1,707.3 1742.1,700.9 1750,694.7 1757.7,687.2 1765.4,682.4 1772.9,677.6 1780.3,671.6"/><polyline points="1708.9,735.8 1717.3,730.3 1725.6,722.3 1733.8,715.7 1741.8,709.3 1749.8,702.9 1757.6,696.6 1765.3,690.3 1773,684.2 1780.4,679.4 1787.8,673.4"/></g>
<g fill="none" stroke="#000" stroke-width="1.3"><polyline points="1545.6,704.1 1713.7,747.7"/><polyline points="1713.7,747.7 1803.5,674.2"/><polyline points="1803.5,674.2 1807.3,541"/><polyline points="1554.6,704.2 1549,708"/><polyline points="1592.2,713.9 1586.7,717.9"/><polyline points="1630.5,723.8 1625.1,727.9"/><polyline points="1669.3,733.9 1664,738"/><polyline points="1708.8,744.2 1703.6,748.3"/><polyline points="1716.7,741.9 1724.7,743.9"/><polyline points="1733.3,728.3 1741.2,730.3"/><polyline points="1749.4,715.1 1757.2,717.1"/><polyline points="1765.1,702.3 1772.8,704.3"/><polyline points="1780.4,689.9 1788,691.8"/><polyline points="1795.2,677.8 1802.7,679.6"/><polyline points="1800.5,672.2 1808,674"/><polyline points="1801.2,648.1 1808.7,649.9"/><polyline points="1801.9,623.7 1809.5,625.5"/><polyline points="1802.6,599.1 1810.2,600.8"/><polyline points="1803.3,574.1 1811,575.8"/><polyline points="1804,548.8 1811.7,550.4"/></g>
<g style="font-family:'Liberation Sans',sans-serif;font-size:17px" text-anchor="middle" fill="#000"><text x="1541.5" y="743.2">470</text><text x="1578.6" y="752.8">475</text><text x="1615.6" y="763.6">480</text><text x="1655" y="774.3">485</text><text x="1693.2" y="785">490</text><text x="1737.4" y="777.9">200</text><text x="1754.1" y="763.6">202</text><text x="1769.7" y="750.4">204</text><text x="1785.2" y="737.3">206</text><text x="1800.7" y="724.1">208</text><text x="1815" y="711">210</text><text x="1836.6" y="558">10000</text><text x="1836.6" y="583.2">8000</text><text x="1834" y="608.3">6000</text><text x="1829.4" y="633.4">4000</text><text x="1830.6" y="657.3">2000</text><text x="1830.6" y="680">0</text></g>
<text style="font-family:'Liberation Sans',sans-serif;font-size:17px" text-anchor="middle" transform="translate(1603.2,779) rotate(15.8)" y="6" textLength="148" lengthAdjust="spacingAndGlyphs">Time-of-flight (<tspan font-style="italic">μs</tspan>)</text>
<text style="font-family:'Liberation Sans',sans-serif;font-size:17px" text-anchor="middle" transform="translate(1799.7,756.3) rotate(-38)" y="6" textLength="79" lengthAdjust="spacingAndGlyphs">Spectrum</text>
<text style="font-family:'Liberation Sans',sans-serif;font-size:17px" text-anchor="middle" transform="translate(1868.8,602) rotate(-90)" y="6" textLength="57.6" lengthAdjust="spacingAndGlyphs">Counts</text>
<text style="font-family:'Liberation Sans',sans-serif;font-size:20px" text-anchor="middle" x="1671.7" y="477.5" textLength="103.6" lengthAdjust="spacingAndGlyphs">Wireframe</text>
<path d="M1845 847l13 13M1858 847l-13 13" stroke="#f0f0ee" stroke-width="3"/>
<g fill="#2e3436"><path d="M137 969h10l-5 6z"/><path d="M276 969h10l-5 6z"/></g>
<g fill="#000">
<path d="M633 963h7l2 2h10v12h-19z"/>
<path d="M701.5 961.5l2.4 0 .6 2.6 2.3 1.3 2.5-.9 1.7 1.7-.9 2.5 1.3 2.3 2.6.6v2.4l-2.6.6-1.3 2.3.9 2.5-1.7 1.7-2.5-.9-2.3 1.3-.6 2.6h-2.4l-.6-2.6-2.3-1.3-2.5.9-1.7-1.7.9-2.5-1.3-2.3-2.6-.6v-2.4l2.6-.6 1.3-2.3-.9-2.5 1.7-1.7 2.5.9 2.3-1.3z M702.7 968.5a3.5 3.5 0 1 0 .01 0z" fill-rule="evenodd"/>
<path d="M753 961h8l5 5v14h-13z M757.5 971h3v3h3v3h-3v-3h-3z" fill-rule="evenodd"/>
<path d="M812 961h8l5 5v14h-13z M816 971h4v3h-4z" fill-rule="evenodd"/>
</g>
<g fill="#8e8e8e"><path d="M931 967l5-6 5 6z"/><path d="M931 977l5 6 5-6z" fill="#b9b9b9"/><path d="M1383 967l5-6 5 6z"/><path d="M1383 977l5 6 5-6z"/></g>
<g fill="none" stroke="#000" stroke-width="2">
<path d="M962 964h22M962 969h22M965 964v5M971 964v5M977 964v5M983 964v5M973 973v10M968 978h10"/>
<path d="M1020 964h22M1020 969h22M1023 964v5M1029 964v5M1035 964v5M1041 964v5M1027 974l8 8M1035 974l-8 8"/>
<path d="M1080 963l14 17M1094 963l-14 17"/><circle cx="1081" cy="964" r="3"/><circle cx="1093" cy="964" r="3"/>
<path d="M1148 964h-10v12h3M1142 968h10v13h-10z"/>
<path d="M1196 963h5v-2h4v2h5v18h-14z M1199 966h8"/>
<path d="M1418 962h23M1429 962v18M1423 975l6 6 6-6"/>
</g>
<path d="M1256 975l7-8 6 5-7 8h-4z" fill="#000"/><path d="M1256.5 976l4 4" stroke="#fff" stroke-width="1.5"/>
<text x="1488" y="983" style="font-family:'Liberation Sans',sans-serif;font-size:26px;font-weight:bold" text-anchor="middle" fill="#1a1a1a">?</text>
<path d="M1814 935.5h60.5l-9 43.5h-62.5z" fill="#0f76b4"/>
<g fill="none" stroke="#9fc6de" stroke-width="1.3"><path d="M1832 935.5l-9.3 43.5M1855 935.5l-9.3 43.5M1810 947.4h20"/></g>
<g fill="#000"><path d="M1742 1292v14l11-7z"/><path d="M1790 1292v14l8-7zM1799 1292v14l8-7z"/></g>
<rect x="1847" y="1292" width="12" height="14" fill="#c6c6c6"/>
<path d="M21 1242v14l-7-7z" fill="#555"/><path d="M1866 1242v14l7-7z" fill="#555"/>

</svg>
</body></html>
